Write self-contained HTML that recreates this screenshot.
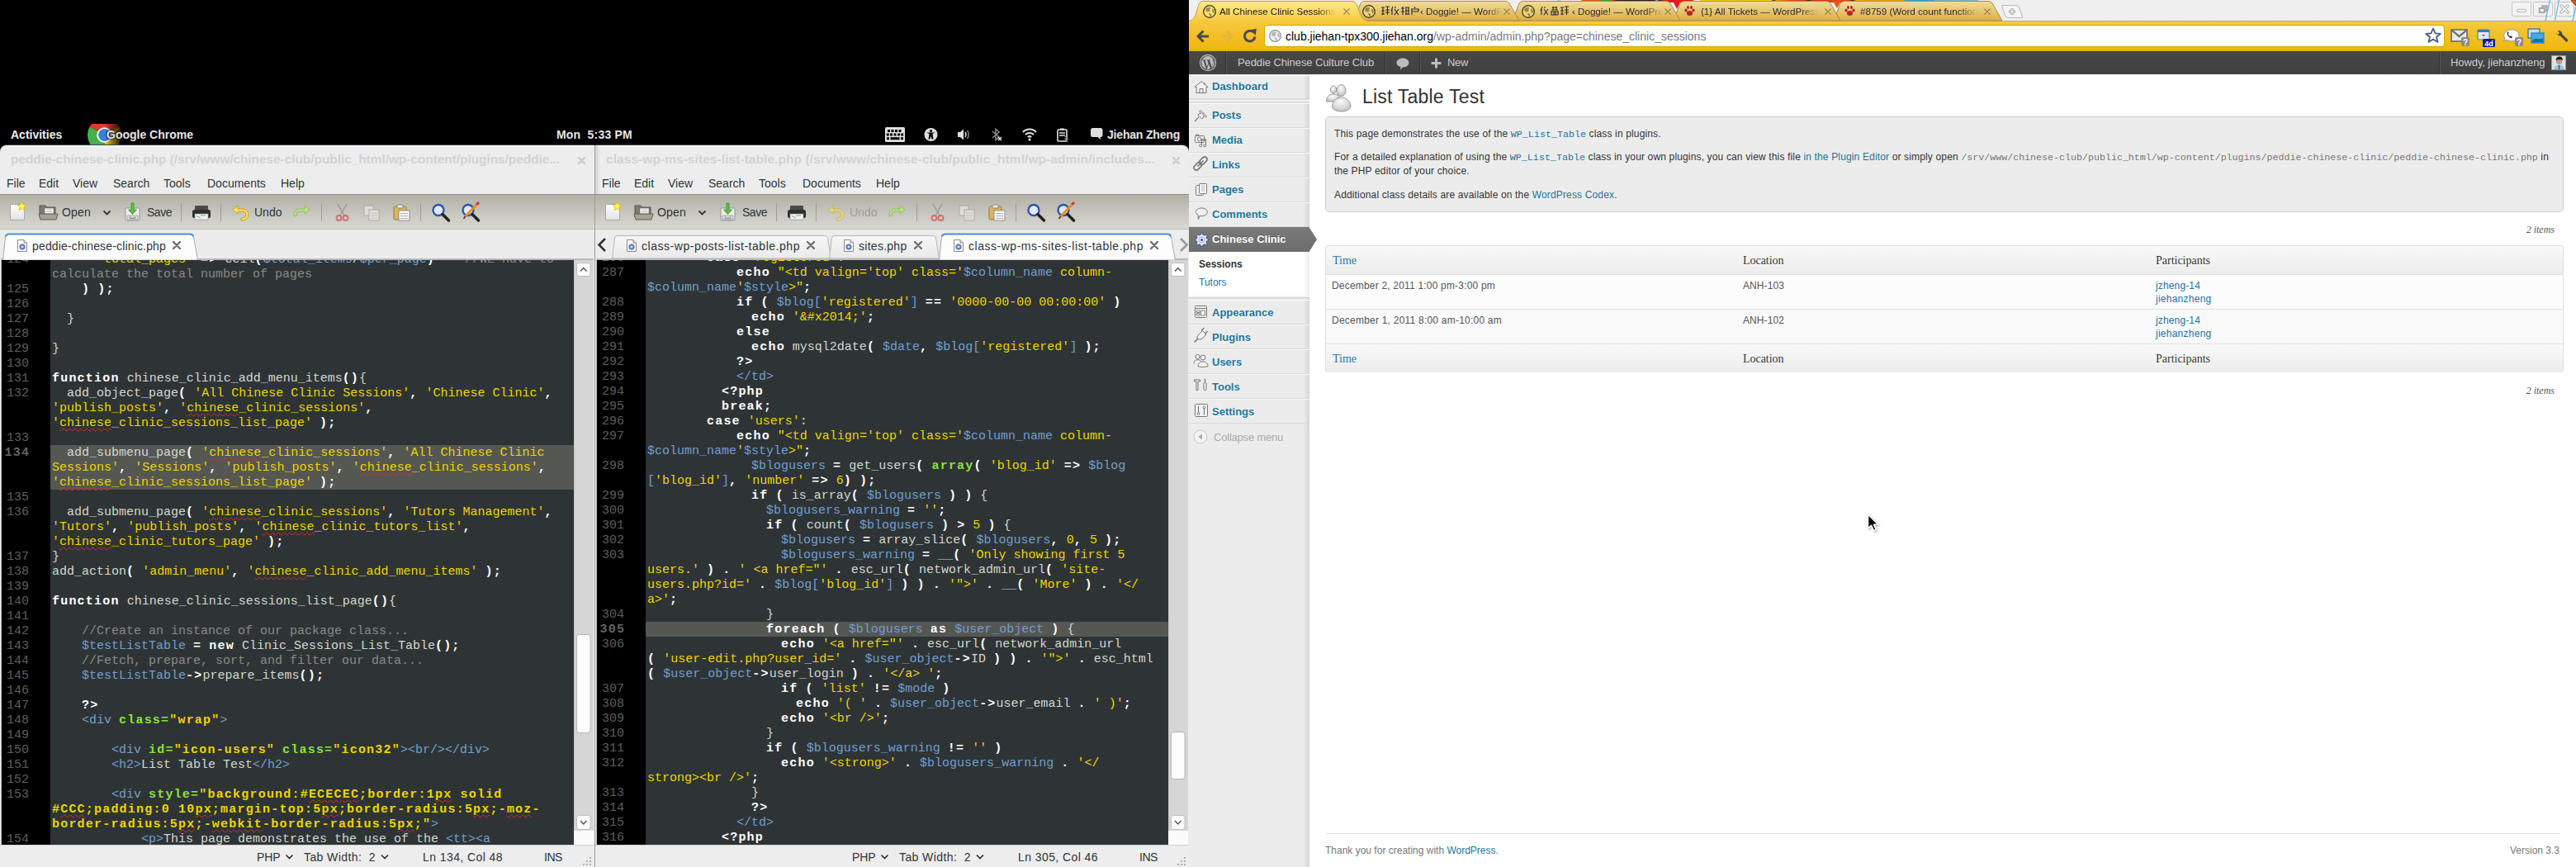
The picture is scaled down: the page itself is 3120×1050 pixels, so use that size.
<!DOCTYPE html><html><head><meta charset="utf-8"><style>
html,body{margin:0;padding:0;width:3120px;height:1050px;overflow:hidden;background:#000;}
.a{position:absolute;}
.code{position:absolute;font:15px/18px "Liberation Mono",monospace;color:#d3d7cf;white-space:pre;}
.code i{font-style:normal}
.code .s{color:#edd400}
.code .sb{color:#edd400;font-weight:bold}
.code .v{color:#729fcf}
.code .h{color:#729fcf}
.code .k{color:#ffffff;font-weight:bold}
.code .c{color:#888a85}
.code .g{color:#8ae234;font-weight:bold}
.code .k,.code .sb,.code .g{letter-spacing:1.2px}
.code u{text-decoration:underline wavy #d42b2b;text-decoration-thickness:1px;text-underline-offset:2px;text-decoration-skip-ink:none}
.ln{position:absolute;font:15px/18px "Liberation Mono",monospace;color:#5d5f5c;text-align:right;white-space:pre;}
</style></head><body>

<div class="a" style="left:0px;top:175px;width:720px;height:875px;background:#3b4652;border-radius:8px 0 0 0;"></div>
<div class="a" style="left:0px;top:176px;width:720px;height:874px;background:linear-gradient(#fafafa,#ededed 3px);border-radius:8px 0 0 0;"></div>
<div class="a" style="left:0px;top:235px;width:720px;height:43px;background:linear-gradient(#b2b1a6,#c4c3bb 45%,#d8d7d2);border-top:1px solid #8c8b84;border-bottom:1px solid #bdbdbd;box-sizing:border-box;"></div>
<div class="a" style="left:0px;top:278px;width:720px;height:37px;background:#ececec;"></div>
<div class="a" style="left:1px;top:313px;width:718px;height:711px;background:#b9b9b9;"></div>
<div class="a" style="left:2px;top:315px;width:59px;height:708px;background:#000;"></div>
<div class="a" style="left:61px;top:315px;width:634px;height:708px;background:#2e3436;overflow:hidden;"></div>
<div class="a" style="left:695px;top:315px;width:24px;height:708px;background:#d6d6d6;border-left:1px solid #c4c4c4;box-sizing:border-box;"></div>
<div class="a" style="left:0px;top:1023px;width:720px;height:27px;background:#ededed;border-top:1px solid #d0d0d0;box-sizing:border-box;"></div>
<div class="a" style="left:721px;top:175px;width:719px;height:875px;background:#3b4652;border-radius:0 8px 0 0;"></div>
<div class="a" style="left:721px;top:176px;width:719px;height:874px;background:linear-gradient(#fafafa,#ededed 3px);border-radius:0 8px 0 0;"></div>
<div class="a" style="left:721px;top:235px;width:719px;height:43px;background:linear-gradient(#b2b1a6,#c4c3bb 45%,#d8d7d2);border-top:1px solid #8c8b84;border-bottom:1px solid #bdbdbd;box-sizing:border-box;"></div>
<div class="a" style="left:721px;top:278px;width:719px;height:37px;background:#ececec;"></div>
<div class="a" style="left:722px;top:313px;width:717px;height:711px;background:#b9b9b9;"></div>
<div class="a" style="left:723px;top:315px;width:59px;height:708px;background:#000;"></div>
<div class="a" style="left:782px;top:315px;width:633px;height:708px;background:#2e3436;overflow:hidden;"></div>
<div class="a" style="left:1415px;top:315px;width:24px;height:708px;background:#d6d6d6;border-left:1px solid #c4c4c4;box-sizing:border-box;"></div>
<div class="a" style="left:721px;top:1023px;width:719px;height:27px;background:#ededed;border-top:1px solid #d0d0d0;box-sizing:border-box;"></div>
<div class="code" style="left:61px;top:315px;width:634px;height:708px;overflow:hidden"><div class="a" style="left:2px;top:-9px">      <i class="s">'total_pages'</i> <i class="k">=&gt;</i> ceil<i class="k">(</i><i class="v">$total_items</i>/<i class="v">$per_page</i><i class="k">)</i>    <i class="c">//WE have to </i></div><div class="a" style="left:2px;top:9px"><i class="c">calculate the total number of pages</i></div><div class="a" style="left:2px;top:27px">    <i class="k">)</i> <i class="k">);</i></div><div class="a" style="left:2px;top:45px"></div><div class="a" style="left:2px;top:63px">  }</div><div class="a" style="left:2px;top:81px"></div><div class="a" style="left:2px;top:99px">}</div><div class="a" style="left:2px;top:117px"></div><div class="a" style="left:2px;top:135px"><i class="k">function</i> chinese_clinic_add_menu_items<i class="k">()</i>{</div><div class="a" style="left:2px;top:153px">  add_object_page<i class="k">(</i> <i class="s">'All Chinese Clinic Sessions'</i><i class="k">,</i> <i class="s">'Chinese Clinic'</i><i class="k">,</i> </div><div class="a" style="left:2px;top:171px"><i class="s">'publish_posts'</i><i class="k">,</i> <i class="s">'</i><u><i class="s">chinese</i></u><i class="s">_clinic_sessions'</i><i class="k">,</i> </div><div class="a" style="left:2px;top:189px"><i class="s">'</i><u><i class="s">chinese</i></u><i class="s">_clinic_sessions_list_page'</i> <i class="k">);</i></div><div class="a" style="left:2px;top:207px"></div><div class="a" style="left:0;top:224px;width:2000px;height:54px;background:#555753"></div><div class="a" style="left:2px;top:225px">  add_submenu_page<i class="k">(</i> <i class="s">'</i><u><i class="s">chinese</i></u><i class="s">_clinic_sessions'</i><i class="k">,</i> <i class="s">'All Chinese Clinic </i></div><div class="a" style="left:2px;top:243px"><i class="s">Sessions'</i><i class="k">,</i> <i class="s">'Sessions'</i><i class="k">,</i> <i class="s">'publish_posts'</i><i class="k">,</i> <i class="s">'</i><u><i class="s">chinese</i></u><i class="s">_clinic_sessions'</i><i class="k">,</i> </div><div class="a" style="left:2px;top:261px"><i class="s">'</i><u><i class="s">chinese</i></u><i class="s">_clinic_sessions_list_page'</i> <i class="k">);</i></div><div class="a" style="left:2px;top:279px"></div><div class="a" style="left:2px;top:297px">  add_submenu_page<i class="k">(</i> <i class="s">'</i><u><i class="s">chinese</i></u><i class="s">_clinic_sessions'</i><i class="k">,</i> <i class="s">'Tutors Management'</i><i class="k">,</i> </div><div class="a" style="left:2px;top:315px"><i class="s">'Tutors'</i><i class="k">,</i> <i class="s">'publish_posts'</i><i class="k">,</i> <i class="s">'</i><u><i class="s">chinese</i></u><i class="s">_clinic_tutors_list'</i><i class="k">,</i> </div><div class="a" style="left:2px;top:333px"><i class="s">'</i><u><i class="s">chinese</i></u><i class="s">_clinic_tutors_page'</i> <i class="k">);</i></div><div class="a" style="left:2px;top:351px">}</div><div class="a" style="left:2px;top:369px">add_action<i class="k">(</i> <i class="s">'admin_menu'</i><i class="k">,</i> <i class="s">'</i><u><i class="s">chinese</i></u><i class="s">_clinic_add_menu_items'</i> <i class="k">);</i></div><div class="a" style="left:2px;top:387px"></div><div class="a" style="left:2px;top:405px"><i class="k">function</i> chinese_clinic_sessions_list_page<i class="k">()</i>{</div><div class="a" style="left:2px;top:423px"></div><div class="a" style="left:2px;top:441px">    <i class="c">//Create an instance of our package class...</i></div><div class="a" style="left:2px;top:459px">    <i class="v">$testListTable</i> <i class="k">=</i> <i class="k">new</i> Clinic_Sessions_List_Table<i class="k">();</i></div><div class="a" style="left:2px;top:477px">    <i class="c">//Fetch, prepare, sort, and filter our data...</i></div><div class="a" style="left:2px;top:495px">    <i class="v">$testListTable</i><i class="k">-&gt;</i>prepare_items<i class="k">();</i></div><div class="a" style="left:2px;top:513px"></div><div class="a" style="left:2px;top:531px">    <i class="k">?&gt;</i></div><div class="a" style="left:2px;top:549px">    <i class="h">&lt;div</i> <i class="g">class=</i><i class="sb">"wrap"</i><i class="h">&gt;</i></div><div class="a" style="left:2px;top:567px"></div><div class="a" style="left:2px;top:585px">        <i class="h">&lt;div</i> <i class="g">id=</i><i class="sb">"icon-users"</i> <i class="g">class=</i><i class="sb">"icon32"</i><i class="h">&gt;&lt;br/&gt;&lt;/div&gt;</i></div><div class="a" style="left:2px;top:603px">        <i class="h">&lt;h2&gt;</i>List Table Test<i class="h">&lt;/h2&gt;</i></div><div class="a" style="left:2px;top:621px"></div><div class="a" style="left:2px;top:639px">        <i class="h">&lt;div</i> <i class="g">style=</i><i class="sb">"background:#</i><u><i class="sb">ECECEC</i></u><i class="sb">;border:1</i><u><i class="sb">px</i></u><i class="sb"> solid </i></div><div class="a" style="left:2px;top:657px"><i class="sb">#</i><u><i class="sb">CCC</i></u><i class="sb">;padding:0 10</i><u><i class="sb">px</i></u><i class="sb">;margin-top:5</i><u><i class="sb">px</i></u><i class="sb">;border-radius:5</i><u><i class="sb">px</i></u><i class="sb">;-</i><u><i class="sb">moz</i></u><i class="sb">-</i></div><div class="a" style="left:2px;top:675px"><i class="sb">border-radius:5</i><u><i class="sb">px</i></u><i class="sb">;-</i><u><i class="sb">webkit</i></u><i class="sb">-border-radius:5</i><u><i class="sb">px</i></u><i class="sb">;"</i><i class="h">&gt;</i></div><div class="a" style="left:2px;top:693px">            <i class="h">&lt;p&gt;</i>This page demonstrates the use of the <i class="h">&lt;tt&gt;&lt;a</i></div></div>
<div class="ln" style="left:2px;top:315px;width:59px;height:708px;overflow:hidden"><div class="a" style="left:0;top:-9px;width:33px;text-align:right;">124</div><div class="a" style="left:0;top:27px;width:33px;text-align:right;">125</div><div class="a" style="left:0;top:45px;width:33px;text-align:right;">126</div><div class="a" style="left:0;top:63px;width:33px;text-align:right;">127</div><div class="a" style="left:0;top:81px;width:33px;text-align:right;">128</div><div class="a" style="left:0;top:99px;width:33px;text-align:right;">129</div><div class="a" style="left:0;top:117px;width:33px;text-align:right;">130</div><div class="a" style="left:0;top:135px;width:33px;text-align:right;">131</div><div class="a" style="left:0;top:153px;width:33px;text-align:right;">132</div><div class="a" style="left:0;top:207px;width:33px;text-align:right;">133</div><div class="a" style="left:0;top:225px;width:33px;text-align:right;font-weight:bold;color:#636562;letter-spacing:1.2px;width:34.2px;">134</div><div class="a" style="left:0;top:279px;width:33px;text-align:right;">135</div><div class="a" style="left:0;top:297px;width:33px;text-align:right;">136</div><div class="a" style="left:0;top:351px;width:33px;text-align:right;">137</div><div class="a" style="left:0;top:369px;width:33px;text-align:right;">138</div><div class="a" style="left:0;top:387px;width:33px;text-align:right;">139</div><div class="a" style="left:0;top:405px;width:33px;text-align:right;">140</div><div class="a" style="left:0;top:423px;width:33px;text-align:right;">141</div><div class="a" style="left:0;top:441px;width:33px;text-align:right;">142</div><div class="a" style="left:0;top:459px;width:33px;text-align:right;">143</div><div class="a" style="left:0;top:477px;width:33px;text-align:right;">144</div><div class="a" style="left:0;top:495px;width:33px;text-align:right;">145</div><div class="a" style="left:0;top:513px;width:33px;text-align:right;">146</div><div class="a" style="left:0;top:531px;width:33px;text-align:right;">147</div><div class="a" style="left:0;top:549px;width:33px;text-align:right;">148</div><div class="a" style="left:0;top:567px;width:33px;text-align:right;">149</div><div class="a" style="left:0;top:585px;width:33px;text-align:right;">150</div><div class="a" style="left:0;top:603px;width:33px;text-align:right;">151</div><div class="a" style="left:0;top:621px;width:33px;text-align:right;">152</div><div class="a" style="left:0;top:639px;width:33px;text-align:right;">153</div><div class="a" style="left:0;top:693px;width:33px;text-align:right;">154</div></div>
<div class="code" style="left:782px;top:315px;width:633px;height:708px;overflow:hidden"><div class="a" style="left:2px;top:-11px">        <i class="k">case</i> <i class="s">'registered'</i>:</div><div class="a" style="left:2px;top:7px">            <i class="k">echo</i> <i class="s">"&lt;td valign='top' class='</i><i class="v">$column_name</i><i class="s"> column-</i></div><div class="a" style="left:2px;top:25px"><i class="v">$column_name</i><i class="s">'</i><i class="v">$style</i><i class="s">&gt;"</i><i class="k">;</i></div><div class="a" style="left:2px;top:43px">            <i class="k">if</i> <i class="k">(</i> <i class="v">$blog[</i><i class="s">'registered'</i><i class="v">]</i> <i class="k">==</i> <i class="s">'0000-00-00 00:00:00'</i> <i class="k">)</i></div><div class="a" style="left:2px;top:61px">              <i class="k">echo</i> <i class="s">'&amp;#x2014;'</i><i class="k">;</i></div><div class="a" style="left:2px;top:79px">            <i class="k">else</i></div><div class="a" style="left:2px;top:97px">              <i class="k">echo</i> mysql2date<i class="k">(</i> <i class="v">$date</i><i class="k">,</i> <i class="v">$blog[</i><i class="s">'registered'</i><i class="v">]</i> <i class="k">);</i></div><div class="a" style="left:2px;top:115px">            <i class="k">?&gt;</i></div><div class="a" style="left:2px;top:133px">            <i class="h">&lt;/td&gt;</i></div><div class="a" style="left:2px;top:151px">          <i class="k">&lt;?php</i></div><div class="a" style="left:2px;top:169px">          <i class="k">break;</i></div><div class="a" style="left:2px;top:187px">        <i class="k">case</i> <i class="s">'users'</i>:</div><div class="a" style="left:2px;top:205px">            <i class="k">echo</i> <i class="s">"&lt;td valign='top' class='</i><i class="v">$column_name</i><i class="s"> column-</i></div><div class="a" style="left:2px;top:223px"><i class="v">$column_name</i><i class="s">'</i><i class="v">$style</i><i class="s">&gt;"</i><i class="k">;</i></div><div class="a" style="left:2px;top:241px">              <i class="v">$blogusers</i> <i class="k">=</i> get_users<i class="k">(</i> <i class="g">array</i><i class="k">(</i> <i class="s">'blog_id'</i> <i class="k">=&gt;</i> <i class="v">$blog</i></div><div class="a" style="left:2px;top:259px"><i class="v">[</i><i class="s">'blog_id'</i><i class="v">]</i><i class="k">,</i> <i class="s">'number'</i> <i class="k">=&gt;</i> <i class="s">6</i><i class="k">)</i> <i class="k">);</i></div><div class="a" style="left:2px;top:277px">              <i class="k">if</i> <i class="k">(</i> is_array<i class="k">(</i> <i class="v">$blogusers</i> <i class="k">)</i> <i class="k">)</i> {</div><div class="a" style="left:2px;top:295px">                <i class="v">$blogusers_warning</i> <i class="k">=</i> <i class="s">''</i><i class="k">;</i></div><div class="a" style="left:2px;top:313px">                <i class="k">if</i> <i class="k">(</i> count<i class="k">(</i> <i class="v">$blogusers</i> <i class="k">)</i> <i class="k">&gt;</i> <i class="s">5</i> <i class="k">)</i> {</div><div class="a" style="left:2px;top:331px">                  <i class="v">$blogusers</i> <i class="k">=</i> array_slice<i class="k">(</i> <i class="v">$blogusers</i><i class="k">,</i> <i class="s">0</i><i class="k">,</i> <i class="s">5</i> <i class="k">);</i></div><div class="a" style="left:2px;top:349px">                  <i class="v">$blogusers_warning</i> <i class="k">=</i> __<i class="k">(</i> <i class="s">'Only showing first 5 </i></div><div class="a" style="left:2px;top:367px"><i class="s">users.'</i> <i class="k">)</i> <i class="k">.</i> <i class="s">' &lt;a href="'</i> <i class="k">.</i> esc_url<i class="k">(</i> network_admin_url<i class="k">(</i> <i class="s">'site-</i></div><div class="a" style="left:2px;top:385px"><i class="s">users.php?id='</i> <i class="k">.</i> <i class="v">$blog[</i><i class="s">'blog_id'</i><i class="v">]</i> <i class="k">)</i> <i class="k">)</i> <i class="k">.</i> <i class="s">'"&gt;'</i> <i class="k">.</i> __<i class="k">(</i> <i class="s">'More'</i> <i class="k">)</i> <i class="k">.</i> <i class="s">'&lt;/</i></div><div class="a" style="left:2px;top:403px"><i class="s">a&gt;'</i><i class="k">;</i></div><div class="a" style="left:2px;top:421px">                }</div><div class="a" style="left:0;top:438px;width:2000px;height:18px;background:#555753"></div><div class="a" style="left:2px;top:439px">                <i class="k">foreach</i> <i class="k">(</i> <i class="v">$blogusers</i> <i class="k">as</i> <i class="v">$user_object</i> <i class="k">)</i> {</div><div class="a" style="left:2px;top:457px">                  <i class="k">echo</i> <i class="s">'&lt;a href="'</i> <i class="k">.</i> esc_url<i class="k">(</i> network_admin_url</div><div class="a" style="left:2px;top:475px"><i class="k">(</i> <i class="s">'user-edit.php?user_id='</i> <i class="k">.</i> <i class="v">$user_object</i><i class="k">-&gt;</i>ID <i class="k">)</i> <i class="k">)</i> <i class="k">.</i> <i class="s">'"&gt;'</i> <i class="k">.</i> esc_html</div><div class="a" style="left:2px;top:493px"><i class="k">(</i> <i class="v">$user_object</i><i class="k">-&gt;</i>user_login <i class="k">)</i> <i class="k">.</i> <i class="s">'&lt;/a&gt; '</i><i class="k">;</i></div><div class="a" style="left:2px;top:511px">                  <i class="k">if</i> <i class="k">(</i> <i class="s">'list'</i> <i class="k">!=</i> <i class="v">$mode</i> <i class="k">)</i></div><div class="a" style="left:2px;top:529px">                    <i class="k">echo</i> <i class="s">'( '</i> <i class="k">.</i> <i class="v">$user_object</i><i class="k">-&gt;</i>user_email <i class="k">.</i> <i class="s">' )'</i><i class="k">;</i></div><div class="a" style="left:2px;top:547px">                  <i class="k">echo</i> <i class="s">'&lt;br /&gt;'</i><i class="k">;</i></div><div class="a" style="left:2px;top:565px">                }</div><div class="a" style="left:2px;top:583px">                <i class="k">if</i> <i class="k">(</i> <i class="v">$blogusers_warning</i> <i class="k">!=</i> <i class="s">''</i> <i class="k">)</i></div><div class="a" style="left:2px;top:601px">                  <i class="k">echo</i> <i class="s">'&lt;strong&gt;'</i> <i class="k">.</i> <i class="v">$blogusers_warning</i> <i class="k">.</i> <i class="s">'&lt;/</i></div><div class="a" style="left:2px;top:619px"><i class="s">strong&gt;&lt;br /&gt;'</i><i class="k">;</i></div><div class="a" style="left:2px;top:637px">              }</div><div class="a" style="left:2px;top:655px">              <i class="k">?&gt;</i></div><div class="a" style="left:2px;top:673px">            <i class="h">&lt;/td&gt;</i></div><div class="a" style="left:2px;top:691px">          <i class="k">&lt;?php</i></div></div>
<div class="ln" style="left:723px;top:315px;width:59px;height:708px;overflow:hidden"><div class="a" style="left:0;top:-11px;width:33px;text-align:right;">286</div><div class="a" style="left:0;top:7px;width:33px;text-align:right;">287</div><div class="a" style="left:0;top:43px;width:33px;text-align:right;">288</div><div class="a" style="left:0;top:61px;width:33px;text-align:right;">289</div><div class="a" style="left:0;top:79px;width:33px;text-align:right;">290</div><div class="a" style="left:0;top:97px;width:33px;text-align:right;">291</div><div class="a" style="left:0;top:115px;width:33px;text-align:right;">292</div><div class="a" style="left:0;top:133px;width:33px;text-align:right;">293</div><div class="a" style="left:0;top:151px;width:33px;text-align:right;">294</div><div class="a" style="left:0;top:169px;width:33px;text-align:right;">295</div><div class="a" style="left:0;top:187px;width:33px;text-align:right;">296</div><div class="a" style="left:0;top:205px;width:33px;text-align:right;">297</div><div class="a" style="left:0;top:241px;width:33px;text-align:right;">298</div><div class="a" style="left:0;top:277px;width:33px;text-align:right;">299</div><div class="a" style="left:0;top:295px;width:33px;text-align:right;">300</div><div class="a" style="left:0;top:313px;width:33px;text-align:right;">301</div><div class="a" style="left:0;top:331px;width:33px;text-align:right;">302</div><div class="a" style="left:0;top:349px;width:33px;text-align:right;">303</div><div class="a" style="left:0;top:421px;width:33px;text-align:right;">304</div><div class="a" style="left:0;top:439px;width:33px;text-align:right;font-weight:bold;color:#636562;letter-spacing:1.2px;width:34.2px;">305</div><div class="a" style="left:0;top:457px;width:33px;text-align:right;">306</div><div class="a" style="left:0;top:511px;width:33px;text-align:right;">307</div><div class="a" style="left:0;top:529px;width:33px;text-align:right;">308</div><div class="a" style="left:0;top:547px;width:33px;text-align:right;">309</div><div class="a" style="left:0;top:565px;width:33px;text-align:right;">310</div><div class="a" style="left:0;top:583px;width:33px;text-align:right;">311</div><div class="a" style="left:0;top:601px;width:33px;text-align:right;">312</div><div class="a" style="left:0;top:637px;width:33px;text-align:right;">313</div><div class="a" style="left:0;top:655px;width:33px;text-align:right;">314</div><div class="a" style="left:0;top:673px;width:33px;text-align:right;">315</div><div class="a" style="left:0;top:691px;width:33px;text-align:right;">316</div></div>
<div class="a" style="left:720px;top:176px;width:1px;height:874px;background:#9c9c9c;"></div>
<div class="a" style="left:721px;top:176px;width:6px;height:59px;background:linear-gradient(90deg,rgba(0,0,0,0.12),rgba(0,0,0,0));"></div>
<div class="a" style="left:13px;top:156px;font:bold 14px/14px 'Liberation Sans',sans-serif;color:#eeeeec;white-space:pre;">Activities</div>
<svg class="a" style="left:104px;top:150px" width="46" height="25" viewBox="0 0 46 25">
<defs><linearGradient id="fadeR" x1="0" x2="1" y1="0" y2="0"><stop offset="0.5" stop-color="#000" stop-opacity="0"/><stop offset="1" stop-color="#000" stop-opacity="1"/></linearGradient>
<clipPath id="cpc"><rect x="0" y="0" width="46" height="25"/></clipPath></defs>
<g clip-path="url(#cpc)">
<path d="M22.5 13.5 L4.75 3.25 A20.5 20.5 0 0 1 40.25 3.25 Z" fill="#e0392b"/>
<path d="M22.5 13.5 L40.25 3.25 A20.5 20.5 0 0 1 22.5 34 Z" fill="#f0c41b"/>
<path d="M22.5 13.5 L22.5 34 A20.5 20.5 0 0 1 4.75 3.25 Z" fill="#47b04b"/>
<circle cx="22.5" cy="13.5" r="9.3" fill="#fff"/>
<circle cx="22.5" cy="13.5" r="7.4" fill="#3d7fd6"/>
<rect x="0" y="0" width="46" height="25" fill="url(#fadeR)"/>
</g></svg>
<div class="a" style="left:129px;top:156px;font:bold 14px/14px 'Liberation Sans',sans-serif;color:#e6e6e6;white-space:pre;text-shadow:0 0 2px #000,0 0 2px #000;">Google Chrome</div>
<div class="a" style="left:674px;top:156px;font:bold 14px/14px 'Liberation Sans',sans-serif;color:#e6e6e6;white-space:pre;letter-spacing:0.2px">Mon  5:33 PM</div>
<div class="a" style="left:1341px;top:156px;font:bold 14px/14px 'Liberation Sans',sans-serif;color:#e6e6e6;white-space:pre;letter-spacing:-0.186px;">Jiehan Zheng</div>
<svg class="a" style="left:1060px;top:150px" width="280" height="25" viewBox="1060 150 280 25">
<!-- keyboard -->
<rect x="1072" y="154" width="24" height="18" rx="1.5" fill="#e0e0e0"/>
<g fill="#000">
<rect x="1075" y="157" width="3" height="3"/><rect x="1079.5" y="157" width="3" height="3"/><rect x="1084" y="157" width="3" height="3"/><rect x="1088.5" y="157" width="3" height="3"/>
<rect x="1073.8" y="161.5" width="3" height="3"/><rect x="1078" y="161.5" width="3" height="3"/><rect x="1082.5" y="161.5" width="3" height="3"/><rect x="1087" y="161.5" width="3" height="3"/><rect x="1091.2" y="161.5" width="3" height="3"/>
<rect x="1074" y="166.2" width="3" height="3"/><rect x="1078.5" y="166.2" width="11" height="3"/><rect x="1091" y="166.2" width="3" height="3"/>
</g>
<!-- accessibility -->
<circle cx="1127.5" cy="163" r="8" fill="#e0e0e0"/>
<circle cx="1127.5" cy="158.5" r="1.6" fill="#000"/>
<path d="M1122 160.5 L1133 160.5 L1129.5 162 L1130.5 168.5 L1128.5 168.5 L1127.5 164.5 L1126.5 168.5 L1124.5 168.5 L1125.5 162 Z" fill="#000"/>
<!-- volume -->
<path d="M1160 160 L1163 160 L1167 156.5 L1167 169.5 L1163 166 L1160 166 Z" fill="#e0e0e0"/>
<path d="M1169 160 Q1171 163 1169 166" stroke="#e0e0e0" stroke-width="1.4" fill="none"/>
<path d="M1171.5 158 Q1175 163 1171.5 168" stroke="#e0e0e0" stroke-width="1.4" fill="none" opacity="0.6"/>
<!-- bluetooth disabled -->
<path d="M1202 159 L1210 166 L1206 169.5 L1206 156.5 L1210 160 L1202 167" stroke="#8a8a8a" stroke-width="1.5" fill="none"/>
<path d="M1209 166 L1213 170 M1213 166 L1209 170" stroke="#e0e0e0" stroke-width="1.5"/>
<!-- wifi -->
<path d="M1239 160 A11 11 0 0 1 1255 160" stroke="#e0e0e0" stroke-width="2" fill="none"/>
<path d="M1242 163 A7 7 0 0 1 1252 163" stroke="#e0e0e0" stroke-width="2" fill="none"/>
<path d="M1244.8 166 A3.5 3.5 0 0 1 1249.2 166" stroke="#e0e0e0" stroke-width="2" fill="none"/>
<circle cx="1247" cy="169" r="1.6" fill="#e0e0e0"/>
<!-- battery -->
<rect x="1281" y="157" width="11" height="14" rx="1" stroke="#e0e0e0" stroke-width="1.6" fill="none"/>
<rect x="1284" y="155.5" width="5" height="2" fill="#e0e0e0"/>
<path d="M1283 161 h7 M1283 164 h7" stroke="#e0e0e0" stroke-width="1.3"/>
<path d="M1289 164 L1293 168 L1290 168 L1293 172" stroke="#8a8a8a" stroke-width="1.2" fill="none"/>
<!-- chat -->
<path d="M1323.5 155 h9.5 a2.5 2.5 0 0 1 2.5 2.5 v6 a2.5 2.5 0 0 1 -2.5 2.5 h-0.5 l0.8 3.2 l-3.8 -3.2 h-6 a2.5 2.5 0 0 1 -2.5 -2.5 v-6 a2.5 2.5 0 0 1 2.5 -2.5z" fill="#e0e0e0"/>
</svg>
<div class="a" style="left:13px;top:185px;font:bold 15.5px/15.5px 'Liberation Sans',sans-serif;color:#d2d2d2;white-space:pre;letter-spacing:-0.076px;">peddie-chinese-clinic.php (/srv/www/chinese-club/public_html/wp-content/plugins/peddie...</div>
<svg class="a" style="left:700px;top:190px" width="9" height="9" viewBox="0 0 10 10"><path d="M1 1 L9 9 M9 1 L1 9" stroke="#cdcdcd" stroke-width="2.8" stroke-linecap="round"/></svg>
<div class="a" style="left:8px;top:215px;font:normal 14px/14px 'Liberation Sans',sans-serif;color:#2e3436;white-space:pre;">File</div>
<div class="a" style="left:47px;top:215px;font:normal 14px/14px 'Liberation Sans',sans-serif;color:#2e3436;white-space:pre;">Edit</div>
<div class="a" style="left:88px;top:215px;font:normal 14px/14px 'Liberation Sans',sans-serif;color:#2e3436;white-space:pre;">View</div>
<div class="a" style="left:137px;top:215px;font:normal 14px/14px 'Liberation Sans',sans-serif;color:#2e3436;white-space:pre;">Search</div>
<div class="a" style="left:198px;top:215px;font:normal 14px/14px 'Liberation Sans',sans-serif;color:#2e3436;white-space:pre;">Tools</div>
<div class="a" style="left:251px;top:215px;font:normal 14px/14px 'Liberation Sans',sans-serif;color:#2e3436;white-space:pre;">Documents</div>
<div class="a" style="left:340px;top:215px;font:normal 14px/14px 'Liberation Sans',sans-serif;color:#2e3436;white-space:pre;">Help</div>
<svg class="a" style="left:0px;top:238px" width="600" height="38" viewBox="0 238 600 38">
<defs>
<linearGradient id="pg0" x1="0" x2="0" y1="0" y2="1"><stop offset="0" stop-color="#ffffff"/><stop offset="1" stop-color="#e2e2e2"/></linearGradient>
<linearGradient id="fold0" x1="0" x2="0" y1="0" y2="1"><stop offset="0" stop-color="#9d9c8c"/><stop offset="1" stop-color="#5f5e55"/></linearGradient>
</defs>
<!-- new -->
<path d="M12.5 247.5 H26 L29.5 251 V266.5 H12.5 Z" fill="url(#pg0)" stroke="#a8a8a8"/>
<path d="M26.5 244.5 l1.6 3.3 3.6 .5 -2.6 2.5 .6 3.6 -3.2 -1.7 -3.2 1.7 .6 -3.6 -2.6 -2.5 3.6 -.5z" fill="#fff25a" stroke="#d8b800" stroke-width="0.8"/>
<!-- open -->
<path d="M48 249 h7 l2 2 h10 v12 h-19z" fill="#7d7c70" stroke="#55554c" stroke-width="1"/>
<rect x="54" y="252" width="11" height="7" fill="#fff" stroke="#666" stroke-width="0.6"/>
<path d="M55.5 254 h8 M55.5 256.5 h8" stroke="#999" stroke-width="0.8"/>
<path d="M47 259 h23 l-2 7 h-19z" fill="#a3a293" stroke="#5d5c52" stroke-width="1"/>
<path d="M125.5 255.5 L129.5 259.5 L133.5 255.5" stroke="#333" stroke-width="1.8" fill="none"/>
<!-- save -->
<rect x="152" y="252" width="17" height="15" rx="1.5" fill="#eeeeee" stroke="#8f8f8f"/>
<path d="M154 261 h13 v5 h-13z" fill="#d9d9d9" stroke="#9a9a9a" stroke-width="0.8"/>
<path d="M157.5 262.5 v1.8 h6 v-1.8" stroke="#777" fill="none" stroke-width="0.9"/>
<path d="M159 246 h3 v8 h3.5 l-5 5.5 -5 -5.5 h3.5z" fill="#5cc43a" stroke="#3a8f1d" stroke-width="0.8"/>
<path d="M219.5 246 v22" stroke="#9e9d96" stroke-width="1"/>
<!-- print -->
<rect x="236" y="249" width="16" height="6" rx="1" fill="#4a4a4a"/>
<rect x="233" y="254" width="22" height="10" rx="2.5" fill="#2f2f2f"/>
<rect x="236" y="259" width="16" height="7" fill="#f4f4f4" stroke="#888" stroke-width="0.6"/>
<path d="M238 261.5 l5 2.5 M243 261 h6" stroke="#5aa845" stroke-width="0.9"/>
<path d="M267.5 246 v22" stroke="#9e9d96" stroke-width="1"/>
<!-- undo -->
<g opacity="1">
<path d="M288 249 l-6 5 6 5 v-3 h6 a4 4 0 0 1 4 4 a4 4 0 0 1 -4 4 h-2 v3 h2 a7 7 0 0 0 7 -7 a7 7 0 0 0 -7 -7 h-6z" fill="#fbe36b" stroke="#c9a20b" stroke-width="1"/>
</g>
<!-- redo -->
<path d="M369 249 l6 5 -6 5 v-3 h-6 a4 4 0 0 0 -4 4 v1.5 h-3 v-1.5 a7 7 0 0 1 7 -7 h6z" fill="#b9e28a" stroke="#8cc05a" stroke-width="1"/>
<path d="M389.5 246 v22" stroke="#9e9d96" stroke-width="1"/>
<!-- cut -->
<g opacity="0.65">
<path d="M409 247 L417 261 M420 247 L412 261" stroke="#8c8c8c" stroke-width="1.6"/>
<circle cx="410.5" cy="264" r="3" fill="none" stroke="#d63b3b" stroke-width="1.8"/>
<circle cx="418.5" cy="264" r="3" fill="none" stroke="#d63b3b" stroke-width="1.8"/>
</g>
<!-- copy -->
<g opacity="0.55">
<rect x="441" y="249" width="11" height="12" fill="#f3f3f3" stroke="#8f8f8f"/>
<rect x="447" y="254" width="12" height="13" fill="#f3f3f3" stroke="#8f8f8f"/>
<path d="M449 258 h8 M449 261 h8 M449 264 h8" stroke="#aaa" stroke-width="0.8"/>
</g>
<!-- paste -->
<rect x="477" y="250" width="15" height="16" rx="1.5" fill="#d9b45c" stroke="#9a7a2a"/>
<rect x="481" y="248" width="7" height="4" rx="1" fill="#e8e8e8" stroke="#777" stroke-width="0.8"/>
<rect x="483" y="255" width="13" height="12" fill="#fafafa" stroke="#8f8f8f"/>
<path d="M485 258.5 h9 M485 261.5 h9 M485 264.5 h9" stroke="#999" stroke-width="0.8"/>
<path d="M509.5 246 v22" stroke="#9e9d96" stroke-width="1"/>
<!-- find -->
<circle cx="531" cy="254.5" r="6.5" fill="#dfe9f7" stroke="#2a56b0" stroke-width="2.4"/>
<path d="M536 259.5 L543.5 267" stroke="#222" stroke-width="3.5" stroke-linecap="round"/>
<!-- replace -->
<circle cx="567" cy="254.5" r="6.5" fill="#dfe9f7" stroke="#2a56b0" stroke-width="2.4"/>
<path d="M572 259.5 L579.5 267" stroke="#222" stroke-width="3.5" stroke-linecap="round"/>
<path d="M563 263 L577 248" stroke="#f08a1c" stroke-width="3"/>
<path d="M577 248 L580 245" stroke="#d43a2a" stroke-width="3"/>
<path d="M561.5 265 L563.5 262" stroke="#333" stroke-width="1.5"/>
</svg>
<div class="a" style="left:75px;top:250px;font:normal 14px/14px 'Liberation Sans',sans-serif;color:#2e3436;white-space:pre;letter-spacing:0.188px;">Open</div>
<div class="a" style="left:178px;top:250px;font:normal 14px/14px 'Liberation Sans',sans-serif;color:#2e3436;white-space:pre;letter-spacing:-0.480px;">Save</div>
<div class="a" style="left:308px;top:250px;font:normal 14px/14px 'Liberation Sans',sans-serif;color:#2e3436;white-space:pre;letter-spacing:0.008px;">Undo</div>
<svg class="a" style="left:3px;top:282px" width="237" height="33" viewBox="0 0 237 33">
<path d="M0.5 33 L3.5 5 Q4 1.5 8 1.5 L227 1.5 Q231 1.5 231.5 5 L236.5 33 Z" fill="#fdfdfd" stroke="#a9a9a9" stroke-width="1"/>
<path d="M3.8 4.5 Q4.5 1.5 8 1.5 L227 1.5 Q230.5 1.5 231.2 4.5" fill="none" stroke="#4a90d9" stroke-width="2.2"/>
</svg>
<svg class="a" style="left:20px;top:289px" width="14" height="17" viewBox="0 0 14 17">
<path d="M1.5 1.5 H9 L12.5 5 V15.5 H1.5 Z" fill="#fbfbfb" stroke="#8a8a8a" stroke-width="1"/>
<path d="M9 1.5 V5 H12.5" fill="#e0e0e0" stroke="#8a8a8a" stroke-width="1"/>
<circle cx="7" cy="10" r="3.2" fill="#6f8fc8" stroke="#3b5ea8" stroke-width="0.8"/>
<circle cx="7" cy="10" r="1.3" fill="#dfe8f7"/>
</svg>
<div class="a" style="left:39px;top:291px;font:normal 14px/14px 'Liberation Sans',sans-serif;color:#2e3436;white-space:pre;letter-spacing:0.160px;">peddie-chinese-clinic.php</div>
<svg class="a" style="left:209px;top:292px" width="10" height="10" viewBox="0 0 10 10"><path d="M1 1 L9 9 M9 1 L1 9" stroke="#6e6e6e" stroke-width="2.4" stroke-linecap="round"/></svg>
<div class="a" style="left:311px;top:1031px;font:normal 14px/14px 'Liberation Sans',sans-serif;color:#2e3436;white-space:pre;letter-spacing:-0.099px;">PHP</div>
<div class="a" style="left:368px;top:1031px;font:normal 14px/14px 'Liberation Sans',sans-serif;color:#2e3436;white-space:pre;letter-spacing:0.407px;">Tab Width:  2</div>
<div class="a" style="left:512px;top:1031px;font:normal 14px/14px 'Liberation Sans',sans-serif;color:#2e3436;white-space:pre;letter-spacing:0.423px;">Ln 134, Col 48</div>
<div class="a" style="left:659px;top:1031px;font:normal 14px/14px 'Liberation Sans',sans-serif;color:#2e3436;white-space:pre;letter-spacing:-0.448px;">INS</div>
<svg class="a" style="left:0px;top:1030px" width="720" height="20" viewBox="0 1030 720 20">
<path d="M346.5 1035.5 L350.5 1039.5 L354.5 1035.5 M462 1035.5 L466 1039.5 L470 1035.5" stroke="#2e3436" stroke-width="1.7" fill="none"/>
<g fill="#b0b0b0"><rect x="714" y="1046" width="2" height="2"/><rect x="710" y="1046" width="2" height="2"/><rect x="706" y="1046" width="2" height="2"/><rect x="714" y="1042" width="2" height="2"/><rect x="710" y="1042" width="2" height="2"/><rect x="714" y="1038" width="2" height="2"/></g>
</svg>
<div class="a" style="left:695px;top:1006px;width:24px;height:17px;background:#fbfbfb;"></div>
<svg class="a" style="left:698px;top:316px" width="18" height="706" viewBox="0 316 18 706">
<rect x="0.5" y="318.5" width="16.5" height="16" rx="3" fill="#fff" stroke="#bdbdbd"/>
<path d="M5 328.5 L8.75 324.5 L12.5 328.5" stroke="#555" stroke-width="1.5" fill="none"/>
<rect x="0.5" y="768.5" width="16.5" height="119" rx="3" fill="#fdfdfd" stroke="#b4b4b4"/>
<rect x="0.5" y="987.5" width="16.5" height="17" rx="3" fill="#fff" stroke="#bdbdbd"/>
<path d="M5 994 L8.75 998 L12.5 994" stroke="#555" stroke-width="1.5" fill="none"/>
</svg>
<div class="a" style="left:734px;top:185px;font:bold 15.5px/15.5px 'Liberation Sans',sans-serif;color:#d2d2d2;white-space:pre;letter-spacing:0.060px;">class-wp-ms-sites-list-table.php (/srv/www/chinese-club/public_html/wp-admin/includes...</div>
<svg class="a" style="left:1420px;top:190px" width="9" height="9" viewBox="0 0 10 10"><path d="M1 1 L9 9 M9 1 L1 9" stroke="#cdcdcd" stroke-width="2.8" stroke-linecap="round"/></svg>
<div class="a" style="left:729px;top:215px;font:normal 14px/14px 'Liberation Sans',sans-serif;color:#2e3436;white-space:pre;">File</div>
<div class="a" style="left:768px;top:215px;font:normal 14px/14px 'Liberation Sans',sans-serif;color:#2e3436;white-space:pre;">Edit</div>
<div class="a" style="left:809px;top:215px;font:normal 14px/14px 'Liberation Sans',sans-serif;color:#2e3436;white-space:pre;">View</div>
<div class="a" style="left:858px;top:215px;font:normal 14px/14px 'Liberation Sans',sans-serif;color:#2e3436;white-space:pre;">Search</div>
<div class="a" style="left:919px;top:215px;font:normal 14px/14px 'Liberation Sans',sans-serif;color:#2e3436;white-space:pre;">Tools</div>
<div class="a" style="left:972px;top:215px;font:normal 14px/14px 'Liberation Sans',sans-serif;color:#2e3436;white-space:pre;">Documents</div>
<div class="a" style="left:1061px;top:215px;font:normal 14px/14px 'Liberation Sans',sans-serif;color:#2e3436;white-space:pre;">Help</div>
<svg class="a" style="left:721px;top:238px" width="600" height="38" viewBox="0 238 600 38">
<defs>
<linearGradient id="pg721" x1="0" x2="0" y1="0" y2="1"><stop offset="0" stop-color="#ffffff"/><stop offset="1" stop-color="#e2e2e2"/></linearGradient>
<linearGradient id="fold721" x1="0" x2="0" y1="0" y2="1"><stop offset="0" stop-color="#9d9c8c"/><stop offset="1" stop-color="#5f5e55"/></linearGradient>
</defs>
<!-- new -->
<path d="M12.5 247.5 H26 L29.5 251 V266.5 H12.5 Z" fill="url(#pg721)" stroke="#a8a8a8"/>
<path d="M26.5 244.5 l1.6 3.3 3.6 .5 -2.6 2.5 .6 3.6 -3.2 -1.7 -3.2 1.7 .6 -3.6 -2.6 -2.5 3.6 -.5z" fill="#fff25a" stroke="#d8b800" stroke-width="0.8"/>
<!-- open -->
<path d="M48 249 h7 l2 2 h10 v12 h-19z" fill="#7d7c70" stroke="#55554c" stroke-width="1"/>
<rect x="54" y="252" width="11" height="7" fill="#fff" stroke="#666" stroke-width="0.6"/>
<path d="M55.5 254 h8 M55.5 256.5 h8" stroke="#999" stroke-width="0.8"/>
<path d="M47 259 h23 l-2 7 h-19z" fill="#a3a293" stroke="#5d5c52" stroke-width="1"/>
<path d="M125.5 255.5 L129.5 259.5 L133.5 255.5" stroke="#333" stroke-width="1.8" fill="none"/>
<!-- save -->
<rect x="152" y="252" width="17" height="15" rx="1.5" fill="#eeeeee" stroke="#8f8f8f"/>
<path d="M154 261 h13 v5 h-13z" fill="#d9d9d9" stroke="#9a9a9a" stroke-width="0.8"/>
<path d="M157.5 262.5 v1.8 h6 v-1.8" stroke="#777" fill="none" stroke-width="0.9"/>
<path d="M159 246 h3 v8 h3.5 l-5 5.5 -5 -5.5 h3.5z" fill="#5cc43a" stroke="#3a8f1d" stroke-width="0.8"/>
<path d="M219.5 246 v22" stroke="#9e9d96" stroke-width="1"/>
<!-- print -->
<rect x="236" y="249" width="16" height="6" rx="1" fill="#4a4a4a"/>
<rect x="233" y="254" width="22" height="10" rx="2.5" fill="#2f2f2f"/>
<rect x="236" y="259" width="16" height="7" fill="#f4f4f4" stroke="#888" stroke-width="0.6"/>
<path d="M238 261.5 l5 2.5 M243 261 h6" stroke="#5aa845" stroke-width="0.9"/>
<path d="M267.5 246 v22" stroke="#9e9d96" stroke-width="1"/>
<!-- undo -->
<g opacity="0.55">
<path d="M288 249 l-6 5 6 5 v-3 h6 a4 4 0 0 1 4 4 a4 4 0 0 1 -4 4 h-2 v3 h2 a7 7 0 0 0 7 -7 a7 7 0 0 0 -7 -7 h-6z" fill="#fbe36b" stroke="#c9a20b" stroke-width="1"/>
</g>
<!-- redo -->
<path d="M369 249 l6 5 -6 5 v-3 h-6 a4 4 0 0 0 -4 4 v1.5 h-3 v-1.5 a7 7 0 0 1 7 -7 h6z" fill="#b9e28a" stroke="#8cc05a" stroke-width="1"/>
<path d="M389.5 246 v22" stroke="#9e9d96" stroke-width="1"/>
<!-- cut -->
<g opacity="0.65">
<path d="M409 247 L417 261 M420 247 L412 261" stroke="#8c8c8c" stroke-width="1.6"/>
<circle cx="410.5" cy="264" r="3" fill="none" stroke="#d63b3b" stroke-width="1.8"/>
<circle cx="418.5" cy="264" r="3" fill="none" stroke="#d63b3b" stroke-width="1.8"/>
</g>
<!-- copy -->
<g opacity="0.55">
<rect x="441" y="249" width="11" height="12" fill="#f3f3f3" stroke="#8f8f8f"/>
<rect x="447" y="254" width="12" height="13" fill="#f3f3f3" stroke="#8f8f8f"/>
<path d="M449 258 h8 M449 261 h8 M449 264 h8" stroke="#aaa" stroke-width="0.8"/>
</g>
<!-- paste -->
<rect x="477" y="250" width="15" height="16" rx="1.5" fill="#d9b45c" stroke="#9a7a2a"/>
<rect x="481" y="248" width="7" height="4" rx="1" fill="#e8e8e8" stroke="#777" stroke-width="0.8"/>
<rect x="483" y="255" width="13" height="12" fill="#fafafa" stroke="#8f8f8f"/>
<path d="M485 258.5 h9 M485 261.5 h9 M485 264.5 h9" stroke="#999" stroke-width="0.8"/>
<path d="M509.5 246 v22" stroke="#9e9d96" stroke-width="1"/>
<!-- find -->
<circle cx="531" cy="254.5" r="6.5" fill="#dfe9f7" stroke="#2a56b0" stroke-width="2.4"/>
<path d="M536 259.5 L543.5 267" stroke="#222" stroke-width="3.5" stroke-linecap="round"/>
<!-- replace -->
<circle cx="567" cy="254.5" r="6.5" fill="#dfe9f7" stroke="#2a56b0" stroke-width="2.4"/>
<path d="M572 259.5 L579.5 267" stroke="#222" stroke-width="3.5" stroke-linecap="round"/>
<path d="M563 263 L577 248" stroke="#f08a1c" stroke-width="3"/>
<path d="M577 248 L580 245" stroke="#d43a2a" stroke-width="3"/>
<path d="M561.5 265 L563.5 262" stroke="#333" stroke-width="1.5"/>
</svg>
<div class="a" style="left:796px;top:250px;font:normal 14px/14px 'Liberation Sans',sans-serif;color:#2e3436;white-space:pre;letter-spacing:0.188px;">Open</div>
<div class="a" style="left:899px;top:250px;font:normal 14px/14px 'Liberation Sans',sans-serif;color:#2e3436;white-space:pre;letter-spacing:-0.480px;">Save</div>
<div class="a" style="left:1029px;top:250px;font:normal 14px/14px 'Liberation Sans',sans-serif;color:#9b9b95;white-space:pre;letter-spacing:0.008px;">Undo</div>
<svg class="a" style="left:741px;top:284px" width="266" height="29" viewBox="0 0 266 29">
<defs><linearGradient id="tg72120" x1="0" x2="0" y1="0" y2="1"><stop offset="0" stop-color="#f7f7f7"/><stop offset="1" stop-color="#e9e9e9"/></linearGradient></defs>
<path d="M0.5 29 L3.5 4 Q4 1.5 7 1.5 L258 1.5 Q261 1.5 261.5 4 L265.5 29 Z" fill="url(#tg72120)" stroke="#b4b4b4" stroke-width="1"/>
</svg>
<svg class="a" style="left:758px;top:289px" width="14" height="17" viewBox="0 0 14 17">
<path d="M1.5 1.5 H9 L12.5 5 V15.5 H1.5 Z" fill="#fbfbfb" stroke="#8a8a8a" stroke-width="1"/>
<path d="M9 1.5 V5 H12.5" fill="#e0e0e0" stroke="#8a8a8a" stroke-width="1"/>
<circle cx="7" cy="10" r="3.2" fill="#6f8fc8" stroke="#3b5ea8" stroke-width="0.8"/>
<circle cx="7" cy="10" r="1.3" fill="#dfe8f7"/>
</svg>
<div class="a" style="left:777px;top:291px;font:normal 14px/14px 'Liberation Sans',sans-serif;color:#2e3436;white-space:pre;letter-spacing:0.530px;">class-wp-posts-list-table.php</div>
<svg class="a" style="left:1004px;top:284px" width="134" height="29" viewBox="0 0 134 29">
<defs><linearGradient id="tg721283" x1="0" x2="0" y1="0" y2="1"><stop offset="0" stop-color="#f7f7f7"/><stop offset="1" stop-color="#e9e9e9"/></linearGradient></defs>
<path d="M0.5 29 L3.5 4 Q4 1.5 7 1.5 L126 1.5 Q129 1.5 129.5 4 L133.5 29 Z" fill="url(#tg721283)" stroke="#b4b4b4" stroke-width="1"/>
</svg>
<svg class="a" style="left:1021px;top:289px" width="14" height="17" viewBox="0 0 14 17">
<path d="M1.5 1.5 H9 L12.5 5 V15.5 H1.5 Z" fill="#fbfbfb" stroke="#8a8a8a" stroke-width="1"/>
<path d="M9 1.5 V5 H12.5" fill="#e0e0e0" stroke="#8a8a8a" stroke-width="1"/>
<circle cx="7" cy="10" r="3.2" fill="#6f8fc8" stroke="#3b5ea8" stroke-width="0.8"/>
<circle cx="7" cy="10" r="1.3" fill="#dfe8f7"/>
</svg>
<div class="a" style="left:1040px;top:291px;font:normal 14px/14px 'Liberation Sans',sans-serif;color:#2e3436;white-space:pre;letter-spacing:0.273px;">sites.php</div>
<svg class="a" style="left:1137px;top:282px" width="287" height="33" viewBox="0 0 287 33">
<path d="M0.5 33 L3.5 5 Q4 1.5 8 1.5 L277 1.5 Q281 1.5 281.5 5 L286.5 33 Z" fill="#fdfdfd" stroke="#a9a9a9" stroke-width="1"/>
<path d="M3.8 4.5 Q4.5 1.5 8 1.5 L277 1.5 Q280.5 1.5 281.2 4.5" fill="none" stroke="#4a90d9" stroke-width="2.2"/>
</svg>
<svg class="a" style="left:1154px;top:289px" width="14" height="17" viewBox="0 0 14 17">
<path d="M1.5 1.5 H9 L12.5 5 V15.5 H1.5 Z" fill="#fbfbfb" stroke="#8a8a8a" stroke-width="1"/>
<path d="M9 1.5 V5 H12.5" fill="#e0e0e0" stroke="#8a8a8a" stroke-width="1"/>
<circle cx="7" cy="10" r="3.2" fill="#6f8fc8" stroke="#3b5ea8" stroke-width="0.8"/>
<circle cx="7" cy="10" r="1.3" fill="#dfe8f7"/>
</svg>
<div class="a" style="left:1173px;top:291px;font:normal 14px/14px 'Liberation Sans',sans-serif;color:#2e3436;white-space:pre;letter-spacing:0.522px;">class-wp-ms-sites-list-table.php</div>
<svg class="a" style="left:977px;top:292px" width="10" height="10" viewBox="0 0 10 10"><path d="M1 1 L9 9 M9 1 L1 9" stroke="#6e6e6e" stroke-width="2.4" stroke-linecap="round"/></svg>
<svg class="a" style="left:1106.5px;top:292px" width="10" height="10" viewBox="0 0 10 10"><path d="M1 1 L9 9 M9 1 L1 9" stroke="#6e6e6e" stroke-width="2.4" stroke-linecap="round"/></svg>
<svg class="a" style="left:1393px;top:292px" width="10" height="10" viewBox="0 0 10 10"><path d="M1 1 L9 9 M9 1 L1 9" stroke="#6e6e6e" stroke-width="2.4" stroke-linecap="round"/></svg>
<div class="a" style="left:1032px;top:1031px;font:normal 14px/14px 'Liberation Sans',sans-serif;color:#2e3436;white-space:pre;letter-spacing:-0.099px;">PHP</div>
<div class="a" style="left:1089px;top:1031px;font:normal 14px/14px 'Liberation Sans',sans-serif;color:#2e3436;white-space:pre;letter-spacing:0.407px;">Tab Width:  2</div>
<div class="a" style="left:1233px;top:1031px;font:normal 14px/14px 'Liberation Sans',sans-serif;color:#2e3436;white-space:pre;letter-spacing:0.423px;">Ln 305, Col 46</div>
<div class="a" style="left:1380px;top:1031px;font:normal 14px/14px 'Liberation Sans',sans-serif;color:#2e3436;white-space:pre;letter-spacing:-0.448px;">INS</div>
<svg class="a" style="left:721px;top:1030px" width="719" height="20" viewBox="0 1030 719 20">
<path d="M346.5 1035.5 L350.5 1039.5 L354.5 1035.5 M462 1035.5 L466 1039.5 L470 1035.5" stroke="#2e3436" stroke-width="1.7" fill="none"/>
<g fill="#b0b0b0"><rect x="713" y="1046" width="2" height="2"/><rect x="709" y="1046" width="2" height="2"/><rect x="705" y="1046" width="2" height="2"/><rect x="713" y="1042" width="2" height="2"/><rect x="709" y="1042" width="2" height="2"/><rect x="713" y="1038" width="2" height="2"/></g>
</svg>
<div class="a" style="left:1415px;top:1006px;width:24px;height:17px;background:#fbfbfb;"></div>
<svg class="a" style="left:1418px;top:316px" width="18" height="706" viewBox="0 316 18 706">
<rect x="0.5" y="318.5" width="16.5" height="16" rx="3" fill="#fff" stroke="#bdbdbd"/>
<path d="M5 328.5 L8.75 324.5 L12.5 328.5" stroke="#555" stroke-width="1.5" fill="none"/>
<rect x="0.5" y="886.5" width="16.5" height="57" rx="3" fill="#fdfdfd" stroke="#b4b4b4"/>
<rect x="0.5" y="987.5" width="16.5" height="17" rx="3" fill="#fff" stroke="#bdbdbd"/>
<path d="M5 994 L8.75 998 L12.5 994" stroke="#555" stroke-width="1.5" fill="none"/>
</svg>
<svg class="a" style="left:721px;top:286px" width="719" height="22" viewBox="721 286 719 22">
<path d="M733 289 L725.5 296.5 L733 304" stroke="#2e3436" stroke-width="2.6" fill="none"/>
<path d="M1430 289 L1437.5 296.5 L1430 304" stroke="#9a9a9a" stroke-width="2.6" fill="none"/>
</svg>
<div class="a" style="left:1440px;top:0px;width:1680px;height:1050px;background:#fff;"></div>
<div class="a" style="left:1440px;top:0px;width:1680px;height:25px;background:#efefef;"></div>
<div class="a" style="left:1440px;top:25px;width:1680px;height:1px;background:#a8a8a8;"></div>
<div class="a" style="left:1860px;top:0;width:540px;height:2.5px;background:linear-gradient(90deg,#f4f4f4 0.00%,#f4f4f4 4.63%,#8fd0f0 5.19%,#f4f4f4 5.93%,#f4f4f4 10.19%,#e05a20 10.37%,#e05a20 14.44%,#3a9a40 14.81%,#3a9a40 17.04%,#e02020 17.41%,#202020 18.15%,#202020 26.67%,#70c0e0 27.04%,#202020 27.78%,#e01c1c 28.52%,#e01c1c 35.19%,#f4f4f4 35.56%,#f4f4f4 36.67%,#f0d010 37.04%,#f0d010 52.78%,#303030 53.33%,#f0b000 54.07%,#e8501a 56.67%,#e03018 60.37%,#202020 61.11%,#e03018 62.22%,#e04a10 70.37%,#202020 71.11%,#f0a018 71.85%,#f0a018 82.41%,#28a0dc 82.96%,#28a0dc 89.26%,#70b8e0 89.63%,#70b8e0 99.07%,#efefef 99.44%)"></div>
<div class="a" style="left:1440px;top:26px;width:1680px;height:36px;background:linear-gradient(#f6ca3e,#f3c02a 40%,#efb70c);"></div>
<div class="a" style="left:1440px;top:61px;width:1680px;height:1px;background:#d8a80a;"></div>
<svg class="a" style="left:1440px;top:0" width="1010" height="26" viewBox="1440 0 1010 26"><defs><linearGradient id="ctin" x1="0" x2="0" y1="0" y2="1"><stop offset="0" stop-color="#f0dc9c"/><stop offset="1" stop-color="#dcae48"/></linearGradient><linearGradient id="ctac" x1="0" x2="0" y1="0" y2="1"><stop offset="0" stop-color="#fde991"/><stop offset="1" stop-color="#f6ca3e"/></linearGradient></defs><path d="M2221 25 L2229 4 Q2231 1.5 2234 1.5 L2408 1.5 Q2411 1.5 2413 4 L2425 25 Z" fill="url(#ctin)" stroke="#b38d3a" stroke-width="1"/><path d="M2027 25 L2035 4 Q2037 1.5 2040 1.5 L2212 1.5 Q2215 1.5 2217 4 L2229 25 Z" fill="url(#ctin)" stroke="#b38d3a" stroke-width="1"/><path d="M1832 25 L1840 4 Q1842 1.5 1845 1.5 L2018 1.5 Q2021 1.5 2023 4 L2035 25 Z" fill="url(#ctin)" stroke="#b38d3a" stroke-width="1"/><path d="M1640 25 L1648 4 Q1650 1.5 1653 1.5 L1823 1.5 Q1826 1.5 1828 4 L1840 25 Z" fill="url(#ctin)" stroke="#b38d3a" stroke-width="1"/><path d="M2424.5 6.5 L2442 6.5 Q2444.5 6.5 2445.5 9 L2450 21.5 L2432 21.5 Q2429.5 21.5 2428.5 19 Z" fill="#f5f5f5" stroke="#b8b8b8" stroke-width="1"/><path d="M2437 10 v8 M2433 14 h8" stroke="#9a9a9a" stroke-width="3"/><path d="M2437 10.5 v7 M2433.5 14 h7" stroke="#fff" stroke-width="1.2"/><path d="M1440 25.5 L1441 25 Q1446 24 1448 18 L1452 5 Q1453 1.5 1457 1.5 L1638 1.5 Q1641 1.5 1643 5 L1648 18 Q1650 24 1656 25 L1656 26 L1440 26 Z" fill="url(#ctac)" stroke="#c9a03a" stroke-width="1"/><rect x="1441" y="25" width="214" height="2" fill="#f6ca3e"/><path d="M2026 1 L2036 1 L2031 11 Z" fill="#e01c1c"/><path d="M2220 1 L2230 1 L2225 10 Z" fill="#e8501a"/></svg>
<svg class="a" style="left:1457px;top:6px" width="16" height="16" viewBox="0 0 16 16">
<circle cx="8" cy="8" r="7.3" fill="rgba(255,245,170,0.35)" stroke="#3a3418" stroke-width="1.3"/>
<path d="M3.3 4.2 Q6 2.2 9 3 L9.3 4.3 L8.2 5.5 L8.8 7 L7.4 8.4 L6 8 L5.6 9.3 L4.2 7.6 L3 6.8 Z" fill="rgba(70,58,15,0.5)"/>
<path d="M7 9.8 L9.6 10.4 L10.6 12 L9.4 14.4 L8.4 14.3 L8 12.3 L7 11 Z" fill="rgba(70,58,15,0.5)"/>
<path d="M10.8 4 L12.6 4.8 L13.8 7 L13.6 9.6 L12.2 10.2 L11.6 8.2 L10.6 7 L11.4 5.6 Z" fill="rgba(70,58,15,0.5)"/>
</svg>
<div class="a" style="left:1477px;top:8px;font:normal 11.6px/11.6px 'Liberation Sans',sans-serif;color:#1a1a1a;white-space:pre;-webkit-mask-image:linear-gradient(90deg,#000 85%,transparent 100%);width:140px;overflow:hiddenletter-spacing:-0.092px;">All Chinese Clinic Sessions</div>
<svg class="a" style="left:1627px;top:10px" width="8" height="8" viewBox="0 0 10 10"><path d="M1 1 L9 9 M9 1 L1 9" stroke="#8a7a40" stroke-width="1.4" stroke-linecap="round"/></svg>
<svg class="a" style="left:1650px;top:6px" width="16" height="16" viewBox="0 0 16 16">
<circle cx="8" cy="8" r="7.3" fill="rgba(255,245,170,0.35)" stroke="#3a3418" stroke-width="1.3"/>
<path d="M3.3 4.2 Q6 2.2 9 3 L9.3 4.3 L8.2 5.5 L8.8 7 L7.4 8.4 L6 8 L5.6 9.3 L4.2 7.6 L3 6.8 Z" fill="rgba(70,58,15,0.5)"/>
<path d="M7 9.8 L9.6 10.4 L10.6 12 L9.4 14.4 L8.4 14.3 L8 12.3 L7 11 Z" fill="rgba(70,58,15,0.5)"/>
<path d="M10.8 4 L12.6 4.8 L13.8 7 L13.6 9.6 L12.2 10.2 L11.6 8.2 L10.6 7 L11.4 5.6 Z" fill="rgba(70,58,15,0.5)"/>
</svg>
<svg class="a" style="left:1672px;top:7px" width="48" height="12" viewBox="0 0 48 12" fill="none" stroke="#2a2a2a" stroke-width="1.1"><path transform="translate(0,0)" d="M1 2h4M3 2v9M1 6h4M1 10h4M6 1h5M8.5 1v10M6 5h5M6 8h5"/><path transform="translate(12,0)" d="M3 1l-2 5M2 4v7M6 1v2M5 4l5 7M10 4l-5 7"/><path transform="translate(24,0)" d="M1 3h4M3 1v10M1 7h4M6 2h5M7 2v9M10 2v9M6 6h5M6 10h5"/><path transform="translate(36,0)" d="M5 1l1 2M1 4h10M2 4v7M2 7h8M10 4v3"/></svg>
<div class="a" style="left:1720px;top:8px;font:normal 11.6px/11.6px 'Liberation Sans',sans-serif;color:#2a2a2a;white-space:pre;width:100px;overflow:hidden;-webkit-mask-image:linear-gradient(90deg,#000 80%,transparent 100%)">‹ Doggie! — WordPress</div>
<svg class="a" style="left:1821px;top:10px" width="8" height="8" viewBox="0 0 10 10"><path d="M1 1 L9 9 M9 1 L1 9" stroke="#8a7a40" stroke-width="1.4" stroke-linecap="round"/></svg>
<svg class="a" style="left:1843px;top:6px" width="16" height="16" viewBox="0 0 16 16">
<circle cx="8" cy="8" r="7.3" fill="rgba(255,245,170,0.35)" stroke="#3a3418" stroke-width="1.3"/>
<path d="M3.3 4.2 Q6 2.2 9 3 L9.3 4.3 L8.2 5.5 L8.8 7 L7.4 8.4 L6 8 L5.6 9.3 L4.2 7.6 L3 6.8 Z" fill="rgba(70,58,15,0.5)"/>
<path d="M7 9.8 L9.6 10.4 L10.6 12 L9.4 14.4 L8.4 14.3 L8 12.3 L7 11 Z" fill="rgba(70,58,15,0.5)"/>
<path d="M10.8 4 L12.6 4.8 L13.8 7 L13.6 9.6 L12.2 10.2 L11.6 8.2 L10.6 7 L11.4 5.6 Z" fill="rgba(70,58,15,0.5)"/>
</svg>
<svg class="a" style="left:1865px;top:7px" width="36" height="12" viewBox="0 0 36 12" fill="none" stroke="#2a2a2a" stroke-width="1.1"><path transform="translate(0,0)" d="M3 1l-2 5M2 4v7M6 1v2M5 4l5 7M10 4l-5 7"/><path transform="translate(12,0)" d="M3 2h6M2 5h8M4 1v4M8 1v4M1 7h10M2 7v4h8v-4M5 7v4M7 7v4"/><path transform="translate(24,0)" d="M1 2h4M3 2v9M1 6h4M1 10h4M6 1h5M8.5 1v10M6 5h5M6 8h5"/></svg>
<div class="a" style="left:1904px;top:8px;font:normal 11.6px/11.6px 'Liberation Sans',sans-serif;color:#2a2a2a;white-space:pre;width:110px;overflow:hidden;-webkit-mask-image:linear-gradient(90deg,#000 80%,transparent 100%)">‹ Doggie! — WordPress</div>
<svg class="a" style="left:2016px;top:10px" width="8" height="8" viewBox="0 0 10 10"><path d="M1 1 L9 9 M9 1 L1 9" stroke="#8a7a40" stroke-width="1.4" stroke-linecap="round"/></svg>
<svg class="a" style="left:2039px;top:6px" width="15" height="15" viewBox="0 0 15 15">
<g fill="#b5262a"><ellipse cx="7.5" cy="10" rx="3.6" ry="3"/><ellipse cx="3" cy="6.5" rx="1.6" ry="2"/><ellipse cx="12" cy="6.5" rx="1.6" ry="2"/><ellipse cx="5.5" cy="3" rx="1.5" ry="2"/><ellipse cx="9.5" cy="3" rx="1.5" ry="2"/></g>
</svg>
<div class="a" style="left:2060px;top:8px;font:normal 11.6px/11.6px 'Liberation Sans',sans-serif;color:#2a2a2a;white-space:pre;width:142px;overflow:hidden;-webkit-mask-image:linear-gradient(90deg,#000 85%,transparent 100%)">{1} All Tickets — WordPress</div>
<svg class="a" style="left:2210px;top:10px" width="8" height="8" viewBox="0 0 10 10"><path d="M1 1 L9 9 M9 1 L1 9" stroke="#8a7a40" stroke-width="1.4" stroke-linecap="round"/></svg>
<svg class="a" style="left:2233px;top:6px" width="15" height="15" viewBox="0 0 15 15">
<g fill="#b5262a"><ellipse cx="7.5" cy="10" rx="3.6" ry="3"/><ellipse cx="3" cy="6.5" rx="1.6" ry="2"/><ellipse cx="12" cy="6.5" rx="1.6" ry="2"/><ellipse cx="5.5" cy="3" rx="1.5" ry="2"/><ellipse cx="9.5" cy="3" rx="1.5" ry="2"/></g>
</svg>
<div class="a" style="left:2253px;top:8px;font:normal 11.6px/11.6px 'Liberation Sans',sans-serif;color:#2a2a2a;white-space:pre;width:142px;overflow:hidden;-webkit-mask-image:linear-gradient(90deg,#000 85%,transparent 100%)">#8759 (Word count function</div>
<svg class="a" style="left:2403px;top:10px" width="8" height="8" viewBox="0 0 10 10"><path d="M1 1 L9 9 M9 1 L1 9" stroke="#8a7a40" stroke-width="1.4" stroke-linecap="round"/></svg>
<svg class="a" style="left:3040px;top:0" width="80" height="25" viewBox="3040 0 80 25">
<rect x="3042.5" y="2.5" width="23" height="17" rx="2" fill="#f3f3f3" stroke="#c4c4c4"/>
<rect x="3068.5" y="2.5" width="23" height="17" rx="2" fill="#f3f3f3" stroke="#c4c4c4"/>
<rect x="3094.5" y="2.5" width="23" height="17" rx="2" fill="#f3f3f3" stroke="#c4c4c4"/>
<rect x="3048.5" y="11.3" width="11" height="3" rx="1.5" fill="#fff" stroke="#aaa" stroke-width="1"/>
<path d="M3078 7.5 h6.5 v5.5 h-2" fill="none" stroke="#aaa" stroke-width="2.4"/>
<rect x="3075.8" y="10" width="6" height="5" fill="#fff" stroke="#aaa" stroke-width="2.2"/>
<path d="M3102 7 L3110 15 M3110 7 L3102 15" stroke="#aaa" stroke-width="3.4" stroke-linecap="round"/>
<path d="M3102 7 L3110 15 M3110 7 L3102 15" stroke="#fff" stroke-width="1.6" stroke-linecap="round"/>
<path d="M3083 25 L3088.5 0 M3094.5 25 L3099.5 0 M3116 25 L3120 8" stroke="#62b6e0" stroke-width="1.2" fill="none"/>
<path d="M3114 0 L3120 0 L3120 7 Q3116 4 3114 0 Z" fill="#e85a20" stroke="#222" stroke-width="0.6"/>
</svg>
<svg class="a" style="left:1445px;top:30px" width="85" height="28" viewBox="1445 30 85 28">
<path d="M1457.5 37.5 L1451 44 L1457.5 50.5 M1451.5 44 H1464" stroke="#4a4a45" stroke-width="3" fill="none" stroke-linejoin="round"/>
<path d="M1486 37.5 L1492.5 44 L1486 50.5 M1492 44 H1479.5" stroke="#e8b53a" stroke-width="3" fill="none" stroke-linejoin="round"/>
<path d="M1520 44.5 A6.3 6.3 0 1 1 1517.5 38.6" stroke="#4a4a45" stroke-width="3" fill="none"/>
<path d="M1513.8 36.2 L1521.8 34.8 L1520.8 42.8 Z" fill="#4a4a45"/>
</svg>
<div class="a" style="left:1531px;top:30px;width:1430px;height:27px;background:#d9a300;border-radius:5px;"></div>
<div class="a" style="left:1532px;top:31px;width:1428px;height:25px;background:#fff;border-radius:4px;"></div>
<svg class="a" style="left:1537px;top:36px" width="15" height="15" viewBox="0 0 16 16">
<circle cx="8" cy="8" r="7.3" fill="#f2f2f2" stroke="#8c8c8c" stroke-width="1.3"/>
<path d="M3.3 4.2 Q6 2.2 9 3 L9.3 4.3 L8.2 5.5 L8.8 7 L7.4 8.4 L6 8 L5.6 9.3 L4.2 7.6 L3 6.8 Z" fill="rgba(140,140,140,0.6)"/>
<path d="M7 9.8 L9.6 10.4 L10.6 12 L9.4 14.4 L8.4 14.3 L8 12.3 L7 11 Z" fill="rgba(140,140,140,0.6)"/>
<path d="M10.8 4 L12.6 4.8 L13.8 7 L13.6 9.6 L12.2 10.2 L11.6 8.2 L10.6 7 L11.4 5.6 Z" fill="rgba(140,140,140,0.6)"/>
</svg>
<div class="a" style="left:1557px;top:36px;font:14px/17px 'Liberation Sans',sans-serif;white-space:pre;color:#000">club.jiehan-tpx300.jiehan.org<span style="color:#7a7a7a">/wp-admin/admin.php?page=chinese_clinic_sessions</span></div>
<svg class="a" style="left:2936px;top:33px" width="22" height="20" viewBox="0 0 22 20">
<path d="M11 1.5 L13.6 7.3 L19.8 7.8 L15 11.8 L16.5 17.9 L11 14.6 L5.5 17.9 L7 11.8 L2.2 7.8 L8.4 7.3 Z" fill="#fff" stroke="#4d5a78" stroke-width="1.8" stroke-linejoin="round"/>
</svg>
<svg class="a" style="left:2965px;top:32px" width="155" height="28" viewBox="2965 32 155 28">
<rect x="2969" y="36" width="19" height="14" fill="#e8e8e8" stroke="#6a6a6a" stroke-width="1.6"/>
<path d="M2969.5 36.5 L2978.5 44 L2987.5 36.5" stroke="#6a6a6a" stroke-width="2.2" fill="none"/>
<rect x="2981" y="45" width="10" height="11" rx="2" fill="#8d8a80"/><text x="2986" y="54.5" font-family="Liberation Sans" font-weight="bold" font-size="10" fill="#fff" text-anchor="middle">?</text>
<rect x="3001" y="36" width="14" height="12" rx="1.5" fill="#dfe8f3" stroke="#4a86c8" stroke-width="1.2"/>
<rect x="3001" y="36" width="14" height="3" fill="#3a78c0"/>
<path d="M3006 42 h4 l-2 2z" fill="#d42020"/>
<rect x="3007" y="47" width="15" height="10" rx="1.5" fill="#0a1e9a"/><text x="3014.5" y="55.5" font-family="Liberation Sans" font-weight="bold" font-size="9" fill="#fff" text-anchor="middle">4d</text>
<path d="M3040 36 a9 7 0 1 1 -4 12 l-4 2.5 2 -4 a9 7 0 0 1 6 -10.5z" fill="#fafafa" stroke="#9a9a9a" stroke-width="1"/>
<path d="M3036.5 39.5 q0 5 5 7 l1.5 -1.5 -2 -2 -1.2 1 q-1.6 -1 -2 -3 l1 -1 -1.5 -2z" fill="#333"/>
<rect x="3046" y="45" width="10" height="11" rx="2" fill="#8d8a80"/><text x="3051" y="54.5" font-family="Liberation Sans" font-weight="bold" font-size="10" fill="#fff" text-anchor="middle">?</text>
<rect x="3062" y="35" width="14" height="11" fill="#c8dcf0" stroke="#2a6aa8" stroke-width="1.2"/>
<rect x="3066" y="40" width="15" height="12" fill="#48a8e0" stroke="#1a80c8" stroke-width="1.2"/>
<path d="M3067 50 q3 -5 7 -3 q3 1 6 -1 v5 h-13z" fill="#1a6ab0"/>
<path d="M3097 38 a4 4 0 0 0 4 5.5 l7.5 7.5 2.2 -2.2 -7.5 -7.5 a4 4 0 0 0 -5.5 -4 l2.2 2.2 -1 2 -2 .6z" fill="#4a4638"/>
</svg>
<div class="a" style="left:1440px;top:62px;width:1680px;height:28px;background:linear-gradient(#474747,#404040);"></div>
<div class="a" style="left:1485px;top:62px;width:1px;height:28px;background:#555;box-shadow:-1px 0 0 #333;"></div>
<div class="a" style="left:1678px;top:62px;width:1px;height:28px;background:#555;box-shadow:-1px 0 0 #333;"></div>
<div class="a" style="left:1720px;top:62px;width:1px;height:28px;background:#555;box-shadow:-1px 0 0 #333;"></div>
<div class="a" style="left:2955px;top:62px;width:1px;height:28px;background:#555;box-shadow:-1px 0 0 #333;"></div>
<svg class="a" style="left:1452px;top:65px" width="22" height="22" viewBox="0 0 22 22">
<circle cx="11" cy="11" r="9.6" fill="none" stroke="#c4c4c4" stroke-width="1.1"/>
<circle cx="11" cy="11" r="7.9" fill="#bdbdbd"/>
<path d="M4.2 7.6 h4.2 v0.9 h-1 l2.6 7.4 l1.6 -4.6 l-1 -2.8 h-0.8 v-0.9 h4.2 v0.9 h-1 l2.6 7.4 l2 -6.2 q0.2 -1.2 -1 -1.2 v-0.9 h2.2 l-3.8 10.8 h-0.8 l-2.2 -6.2 l-2.2 6.2 h-0.8 l-3.6 -10.4 h-1 z" fill="#474747"/>
</svg>
<div class="a" style="left:1499px;top:69px;font:normal 13px/13px 'Liberation Sans',sans-serif;color:#cccccc;white-space:pre;letter-spacing:-0.098px;">Peddie Chinese Culture Club</div>
<svg class="a" style="left:1690px;top:69px" width="18" height="17" viewBox="0 0 18 17">
<path d="M9 1.5 C13.5 1.5 16.5 4 16.5 7 C16.5 10 13.5 12.3 9.5 12.3 L6 15.5 L6.5 12 C3.5 11.3 1.5 9.5 1.5 7 C1.5 4 4.5 1.5 9 1.5Z" fill="#bbbbbb"/>
</svg>
<svg class="a" style="left:1733px;top:70px" width="13" height="13" viewBox="0 0 13 13"><path d="M6.5 0.5 v12 M0.5 6.5 h12" stroke="#bbbbbb" stroke-width="3"/></svg>
<div class="a" style="left:1753px;top:69px;font:normal 13px/13px 'Liberation Sans',sans-serif;color:#cccccc;white-space:pre;letter-spacing:-0.339px;">New</div>
<div class="a" style="left:2968px;top:69px;font:normal 13px/13px 'Liberation Sans',sans-serif;color:#cccccc;white-space:pre;letter-spacing:-0.090px;">Howdy, jiehanzheng</div>
<svg class="a" style="left:3090px;top:67px" width="18" height="18" viewBox="0 0 18 18">
<rect x="0.5" y="0.5" width="17" height="17" fill="#e8e0d0" stroke="#999"/>
<rect x="2" y="2" width="14" height="15" fill="#d8e4ea"/>
<ellipse cx="9.5" cy="7" rx="3.6" ry="4" fill="#c89878"/>
<path d="M5.5 6 q0.5 -4.5 4.5 -4.5 q4 0 4 4.5 q-2 -2 -8.5 0z" fill="#1a1a1a"/>
<path d="M3 17 q1 -5 6.5 -5.5 q5.5 0.5 6.5 5.5z" fill="#9cc0e0"/>
<path d="M9.5 12 v5" stroke="#304070" stroke-width="1.2"/>
</svg>
<div class="a" style="left:1440px;top:90px;width:146px;height:960px;background:#ececec;"></div>
<div class="a" style="left:1578px;top:90px;width:8px;height:960px;background:linear-gradient(90deg,rgba(0,0,0,0),rgba(0,0,0,0.09));"></div>
<div class="a" style="left:1585px;top:90px;width:1px;height:960px;background:#d1d1d1;"></div>
<div class="a" style="left:1440px;top:91px;width:146px;height:29px;border-top:1px solid #f9f9f9;border-bottom:1px solid #d8d8d8;box-sizing:border-box;"></div>
<div class="a" style="left:1468px;top:98px;font:bold 13px/13px 'Liberation Sans',sans-serif;color:#21759b;white-space:pre;text-shadow:0 1px 0 #fff;">Dashboard</div>
<div class="a" style="left:1440px;top:125px;width:146px;height:30px;border-top:1px solid #f9f9f9;border-bottom:1px solid #d8d8d8;box-sizing:border-box;"></div>
<div class="a" style="left:1468px;top:133px;font:bold 13px/13px 'Liberation Sans',sans-serif;color:#21759b;white-space:pre;text-shadow:0 1px 0 #fff;">Posts</div>
<div class="a" style="left:1440px;top:155px;width:146px;height:30px;border-top:1px solid #f9f9f9;border-bottom:1px solid #d8d8d8;box-sizing:border-box;"></div>
<div class="a" style="left:1468px;top:163px;font:bold 13px/13px 'Liberation Sans',sans-serif;color:#21759b;white-space:pre;text-shadow:0 1px 0 #fff;">Media</div>
<div class="a" style="left:1440px;top:185px;width:146px;height:30px;border-top:1px solid #f9f9f9;border-bottom:1px solid #d8d8d8;box-sizing:border-box;"></div>
<div class="a" style="left:1468px;top:193px;font:bold 13px/13px 'Liberation Sans',sans-serif;color:#21759b;white-space:pre;text-shadow:0 1px 0 #fff;">Links</div>
<div class="a" style="left:1440px;top:215px;width:146px;height:30px;border-top:1px solid #f9f9f9;border-bottom:1px solid #d8d8d8;box-sizing:border-box;"></div>
<div class="a" style="left:1468px;top:223px;font:bold 13px/13px 'Liberation Sans',sans-serif;color:#21759b;white-space:pre;text-shadow:0 1px 0 #fff;">Pages</div>
<div class="a" style="left:1440px;top:245px;width:146px;height:30px;border-top:1px solid #f9f9f9;border-bottom:1px solid #d8d8d8;box-sizing:border-box;"></div>
<div class="a" style="left:1468px;top:253px;font:bold 13px/13px 'Liberation Sans',sans-serif;color:#21759b;white-space:pre;text-shadow:0 1px 0 #fff;">Comments</div>
<div class="a" style="left:1440px;top:363px;width:146px;height:30px;border-top:1px solid #f9f9f9;border-bottom:1px solid #d8d8d8;box-sizing:border-box;"></div>
<div class="a" style="left:1468px;top:372px;font:bold 13px/13px 'Liberation Sans',sans-serif;color:#21759b;white-space:pre;text-shadow:0 1px 0 #fff;">Appearance</div>
<div class="a" style="left:1440px;top:393px;width:146px;height:30px;border-top:1px solid #f9f9f9;border-bottom:1px solid #d8d8d8;box-sizing:border-box;"></div>
<div class="a" style="left:1468px;top:402px;font:bold 13px/13px 'Liberation Sans',sans-serif;color:#21759b;white-space:pre;text-shadow:0 1px 0 #fff;">Plugins</div>
<div class="a" style="left:1440px;top:423px;width:146px;height:30px;border-top:1px solid #f9f9f9;border-bottom:1px solid #d8d8d8;box-sizing:border-box;"></div>
<div class="a" style="left:1468px;top:432px;font:bold 13px/13px 'Liberation Sans',sans-serif;color:#21759b;white-space:pre;text-shadow:0 1px 0 #fff;">Users</div>
<div class="a" style="left:1440px;top:453px;width:146px;height:30px;border-top:1px solid #f9f9f9;border-bottom:1px solid #d8d8d8;box-sizing:border-box;"></div>
<div class="a" style="left:1468px;top:462px;font:bold 13px/13px 'Liberation Sans',sans-serif;color:#21759b;white-space:pre;text-shadow:0 1px 0 #fff;">Tools</div>
<div class="a" style="left:1440px;top:483px;width:146px;height:30px;border-top:1px solid #f9f9f9;border-bottom:1px solid #d8d8d8;box-sizing:border-box;"></div>
<div class="a" style="left:1468px;top:492px;font:bold 13px/13px 'Liberation Sans',sans-serif;color:#21759b;white-space:pre;text-shadow:0 1px 0 #fff;">Settings</div>
<div class="a" style="left:1440px;top:120px;width:146px;height:5px;background:linear-gradient(#dcdcdc,#dcdcdc 20%,#f6f6f6 20%,#f6f6f6 60%,#cfcfcf 60%,#cfcfcf 80%,#e4e4e4 80%);"></div>
<div class="a" style="left:1440px;top:357px;width:146px;height:5px;background:linear-gradient(#dcdcdc,#dcdcdc 20%,#f6f6f6 20%,#f6f6f6 60%,#cfcfcf 60%,#cfcfcf 80%,#e4e4e4 80%);"></div>
<svg class="a" style="left:1440px;top:275px" width="160" height="30" viewBox="1440 275 160 30">
<defs><linearGradient id="actg" x1="0" x2="0" y1="0" y2="1"><stop offset="0" stop-color="#7a7a7a"/><stop offset="1" stop-color="#6d6d6d"/></linearGradient></defs>
<path d="M1440 275 H1585.5 L1595 290 L1585.5 305 H1440 Z" fill="url(#actg)"/>
</svg>
<svg class="a" style="left:1446.5px;top:281.5px" width="17" height="17" viewBox="0 0 17 17">
<path d="M7.13 2.35 L7.48 0.67 L9.52 0.67 L9.87 2.35 L11.88 3.18 L13.31 2.24 L14.76 3.69 L13.82 5.12 L14.65 7.13 L16.33 7.48 L16.33 9.52 L14.65 9.87 L13.82 11.88 L14.76 13.31 L13.31 14.76 L11.88 13.82 L9.87 14.65 L9.52 16.33 L7.48 16.33 L7.13 14.65 L5.12 13.82 L3.69 14.76 L2.24 13.31 L3.18 11.88 L2.35 9.87 L0.67 9.52 L0.67 7.48 L2.35 7.13 L3.18 5.12 L2.24 3.69 L3.69 2.24 L5.12 3.18 Z" fill="#eef0fa" stroke="#34589a" stroke-width="1" stroke-linejoin="round"/>
<circle cx="8.5" cy="8.5" r="3.4" fill="none" stroke="#a4b0dc" stroke-width="1.2"/>
<circle cx="8.5" cy="8.5" r="1.5" fill="#3c4a70"/>
</svg>
<div class="a" style="left:1468px;top:283px;font:bold 13px/13px 'Liberation Sans',sans-serif;color:#ffffff;white-space:pre;text-shadow:0 -1px 0 #555;">Chinese Clinic</div>
<div class="a" style="left:1440px;top:305px;width:146px;height:53px;background:#fff;"></div>
<div class="a" style="left:1578px;top:305px;width:8px;height:53px;background:linear-gradient(90deg,rgba(0,0,0,0),rgba(0,0,0,0.07));"></div>
<div class="a" style="left:1452px;top:314px;font:bold 12px/12px 'Liberation Sans',sans-serif;color:#333333;white-space:pre;">Sessions</div>
<div class="a" style="left:1452px;top:336px;font:normal 12px/12px 'Liberation Sans',sans-serif;color:#21759b;white-space:pre;">Tutors</div>
<svg class="a" style="left:1445px;top:520px" width="18" height="18" viewBox="0 0 18 18">
<circle cx="9" cy="9" r="8" fill="#f4f4f4" stroke="#c8c8c8"/>
<path d="M11 5.5 L6 9 L11 12.5 Z" fill="#aaaaaa"/>
</svg>
<div class="a" style="left:1470px;top:523px;font:normal 13px/13px 'Liberation Sans',sans-serif;color:#aaaaaa;white-space:pre;letter-spacing:-0.209px;">Collapse menu</div>
<svg class="a" style="left:1444px;top:90px" width="24" height="440" viewBox="1444 90 24 440" fill="#f2f2f2" stroke="#777" stroke-width="1" stroke-linejoin="round">
<!-- dashboard house -->
<path d="M1447 105.5 L1455 98.5 L1463 105.5 L1461 105.5 L1461 112.5 L1449 112.5 L1449 105.5 Z"/>
<path d="M1453 112.5 V107.5 H1457 V112.5" fill="none"/>
<path d="M1459 100 V103" fill="none"/>
<!-- posts pin -->
<path d="M1454 133.5 L1461.5 141 L1459.8 142.2 L1452.8 135.2 Z"/>
<path d="M1455 136.5 L1458.5 140 L1455.8 144 L1450.8 139 Z"/>
<path d="M1452 141.8 L1447 147" fill="none" stroke-width="1.2"/>
<!-- media -->
<rect x="1447.5" y="164.5" width="11" height="8" rx="1"/>
<path d="M1448.5 164.5 v-1.5 h3 v1.5" fill="none"/>
<circle cx="1452.5" cy="168.5" r="2.2"/>
<path d="M1455.5 176 V168.5 H1460.5 V176 M1455.5 170.3 H1460.5" fill="none"/>
<circle cx="1454.2" cy="176.3" r="1.5"/><circle cx="1459.2" cy="176.3" r="1.5"/>
<!-- links -->
<g transform="rotate(-45 1454 198)"><rect x="1444" y="195" width="10.5" height="6" rx="3" fill="none" stroke-width="1.6"/><rect x="1453.5" y="195" width="10.5" height="6" rx="3" fill="none" stroke-width="1.6"/><path d="M1449 198 h10" stroke-width="1.6"/></g>
<!-- pages -->
<rect x="1448.5" y="224.5" width="9" height="12" rx="1"/>
<rect x="1452.5" y="222.5" width="9" height="12" rx="0.8" fill="#fafafa"/>
<path d="M1454.5 225 h5 M1454.5 227 h5 M1454.5 229 h5 M1454.5 231 h5" stroke="#aaa" stroke-width="0.8"/>
<!-- comments -->
<path d="M1455.3 252 c4 0 7 2.1 7 4.8 s-3 4.8 -7 4.8 c-0.8 0 -1.6 -0.1 -2.3 -0.3 l-1.6 4.2 l-0.3 -5.2 c-1.7 -0.9 -2.8 -2.1 -2.8 -3.5 c0 -2.7 3 -4.8 7 -4.8z"/>
<!-- appearance -->
<rect x="1447.5" y="370.5" width="14" height="14" rx="1"/>
<path d="M1447.5 373.5 h14" fill="none"/>
<rect x="1449.5" y="376" width="3.5" height="2.5" fill="none" stroke-width="0.9"/><rect x="1449.5" y="379.5" width="3.5" height="2.5" fill="none" stroke-width="0.9"/><rect x="1454.5" y="376" width="5" height="6" fill="none" stroke-width="0.9"/>
<!-- plugins -->
<path d="M1451 406 L1456.5 400.5 L1461 405 L1455.5 410.5 Q1452 412 1450 410 Q1449.5 408 1451 406 Z"/>
<path d="M1455 400.5 L1458.5 397 M1459 404.5 L1462.5 401" fill="none" stroke-width="1.3"/>
<path d="M1450.5 410.5 L1446.5 414.5" fill="none" stroke-width="1.6"/>
<!-- users -->
<circle cx="1450.5" cy="432" r="2.6"/>
<path d="M1446 440.5 c0 -3 1.8 -4.8 4.5 -4.8 s3.5 1 4 2" />
<circle cx="1457" cy="433" r="3"/>
<path d="M1451 443.5 c0 -3.5 2.5 -5.5 6 -5.5 s6 2 6 5.5 c-1.5 1.2 -10.5 1.2 -12 0z"/>
<!-- tools -->
<path d="M1446.5 460 h7 v2 h-2.5 v10.5 h-2 v-10.5 h-2.5 z"/>
<path d="M1459.5 458.5 v5" fill="none" stroke-width="1.2"/>
<rect x="1458" y="463.5" width="3" height="9" rx="1.2"/>
<!-- settings -->
<rect x="1447.5" y="489.5" width="15" height="15" rx="1"/>
<path d="M1451.5 492 v7.5 M1458.5 494.5 v8" fill="none" stroke-width="1.1"/>
<circle cx="1451.5" cy="501" r="1.4" fill="none"/><circle cx="1458.5" cy="493.5" r="1.4" fill="none"/>
</svg>
<svg class="a" style="left:1605px;top:102px" width="36" height="35" viewBox="0 0 36 35">
<defs><radialGradient id="uhg" cx="0.45" cy="0.3" r="0.75"><stop offset="0" stop-color="#fbfbfb"/><stop offset="0.6" stop-color="#d8d8d8"/><stop offset="1" stop-color="#bcbcbc"/></radialGradient></defs>
<ellipse cx="10" cy="6.5" rx="3.6" ry="4.6" fill="url(#uhg)" stroke="#7a7a7a" stroke-width="0.7"/>
<path d="M1.5 21 c0 -6 3.5 -9 8.5 -9 s6.5 2 7.5 4 l-3 5z" fill="url(#uhg)" stroke="#7a7a7a" stroke-width="0.7"/>
<ellipse cx="19.5" cy="7.5" rx="5.6" ry="7" fill="url(#uhg)" stroke="#7a7a7a" stroke-width="0.7"/>
<path d="M8.5 27.5 c0 -7 5 -11.5 11 -11.5 s11.5 4.5 11.5 11.5 c-1.5 3.5 -6 5.5 -11.5 5.5 s-10 -2 -11 -5.5z" fill="url(#uhg)" stroke="#7a7a7a" stroke-width="0.7"/>
</svg>
<div class="a" style="left:1650px;top:106px;font:normal 23px/23px 'Liberation Sans',sans-serif;color:#333333;white-space:pre;letter-spacing:0.205px;">List Table Test</div>
<div class="a" style="left:1605px;top:141px;width:1500px;height:116px;background:#ececec;border:1px solid #cccccc;border-radius:5px;box-sizing:border-box;"></div>
<div class="a" style="left:1616px;top:156px;font:12px/12px 'Liberation Sans',sans-serif;color:#333;white-space:pre;letter-spacing:0.15px">This page demonstrates the use of the <span style="font-family:'Liberation Mono',monospace;font-size:11.7px;color:#21759b;letter-spacing:0">WP_List_Table</span> class in plugins.</div>
<div class="a" style="left:1616px;top:184px;font:12px/12px 'Liberation Sans',sans-serif;color:#333;white-space:pre;letter-spacing:0.15px">For a detailed explanation of using the <span style="font-family:'Liberation Mono',monospace;font-size:11.7px;color:#21759b;letter-spacing:0">WP_List_Table</span> class in your own plugins, you can view this file <span style="color:#21759b">in the Plugin Editor</span> or simply open <span style="font-family:'Liberation Mono',monospace;font-size:11.65px;color:#777;letter-spacing:0">/srv/www/chinese-club/public_html/wp-content/plugins/peddie-chinese-clinic/peddie-chinese-clinic.php</span> in</div>
<div class="a" style="left:1616px;top:201px;font:12px/12px 'Liberation Sans',sans-serif;color:#333;white-space:pre;letter-spacing:0.15px">the PHP editor of your choice.</div>
<div class="a" style="left:1616px;top:230px;font:12px/12px 'Liberation Sans',sans-serif;color:#333;white-space:pre;letter-spacing:0.15px">Additional class details are available on the <span style="color:#21759b">WordPress Codex</span>.</div>
<div class="a" style="left:1094px;width:2000px;top:272px;font:italic normal 12px/12px 'Liberation Serif',serif;color:#555555;text-align:right;white-space:pre;">2 items</div>
<div class="a" style="left:1605px;top:297px;width:1500px;height:154px;background:#f9f9f9;border:1px solid #dfdfdf;border-radius:3px;box-sizing:border-box;"></div>
<div class="a" style="left:1606px;top:298px;width:1498px;height:35px;background:linear-gradient(#f9f9f9,#ececec);border-bottom:1px solid #dfdfdf;box-sizing:border-box;border-radius:3px 3px 0 0;"></div>
<div class="a" style="left:1606px;top:374px;width:1498px;height:1px;background:#dfdfdf;"></div>
<div class="a" style="left:1606px;top:416px;width:1498px;height:35px;background:linear-gradient(#f9f9f9,#ececec);border-top:1px solid #dfdfdf;box-sizing:border-box;border-radius:0 0 3px 3px;"></div>
<div class="a" style="left:1606px;top:333px;width:1498px;height:41px;background:#fcfcfc;"></div>
<div class="a" style="left:1606px;top:375px;width:1498px;height:41px;background:#f9f9f9;"></div>
<div class="a" style="left:1614px;top:309px;font:normal 14px/14px 'Liberation Serif',serif;color:#21759b;white-space:pre;text-shadow:0 1px 0 #fff;letter-spacing:-0.016px;">Time</div>
<div class="a" style="left:2111px;top:309px;font:normal 14px/14px 'Liberation Serif',serif;color:#333333;white-space:pre;text-shadow:0 1px 0 #fff;letter-spacing:-0.033px;">Location</div>
<div class="a" style="left:2611px;top:309px;font:normal 14px/14px 'Liberation Serif',serif;color:#333333;white-space:pre;text-shadow:0 1px 0 #fff;letter-spacing:-0.009px;">Participants</div>
<div class="a" style="left:1614px;top:428px;font:normal 14px/14px 'Liberation Serif',serif;color:#21759b;white-space:pre;text-shadow:0 1px 0 #fff;letter-spacing:-0.016px;">Time</div>
<div class="a" style="left:2111px;top:428px;font:normal 14px/14px 'Liberation Serif',serif;color:#333333;white-space:pre;text-shadow:0 1px 0 #fff;letter-spacing:-0.033px;">Location</div>
<div class="a" style="left:2611px;top:428px;font:normal 14px/14px 'Liberation Serif',serif;color:#333333;white-space:pre;text-shadow:0 1px 0 #fff;letter-spacing:-0.009px;">Participants</div>
<div class="a" style="left:1613px;top:340px;font:normal 12px/12px 'Liberation Sans',sans-serif;color:#555555;white-space:pre;letter-spacing:0.191px;">December 2, 2011 1:00 pm-3:00 pm</div>
<div class="a" style="left:2111px;top:340px;font:normal 12px/12px 'Liberation Sans',sans-serif;color:#555555;white-space:pre;letter-spacing:0.092px;">ANH-103</div>
<div class="a" style="left:2611px;top:340px;font:normal 12px/12px 'Liberation Sans',sans-serif;color:#21759b;white-space:pre;letter-spacing:0.142px;">jzheng-14</div>
<div class="a" style="left:2611px;top:356px;font:normal 12px/12px 'Liberation Sans',sans-serif;color:#21759b;white-space:pre;letter-spacing:0.251px;">jiehanzheng</div>
<div class="a" style="left:1613px;top:382px;font:normal 12px/12px 'Liberation Sans',sans-serif;color:#555555;white-space:pre;letter-spacing:0.225px;">December 1, 2011 8:00 am-10:00 am</div>
<div class="a" style="left:2111px;top:382px;font:normal 12px/12px 'Liberation Sans',sans-serif;color:#555555;white-space:pre;letter-spacing:0.092px;">ANH-102</div>
<div class="a" style="left:2611px;top:382px;font:normal 12px/12px 'Liberation Sans',sans-serif;color:#21759b;white-space:pre;letter-spacing:0.142px;">jzheng-14</div>
<div class="a" style="left:2611px;top:398px;font:normal 12px/12px 'Liberation Sans',sans-serif;color:#21759b;white-space:pre;letter-spacing:0.251px;">jiehanzheng</div>
<div class="a" style="left:1094px;width:2000px;top:467px;font:italic normal 12px/12px 'Liberation Serif',serif;color:#555555;text-align:right;white-space:pre;">2 items</div>
<div class="a" style="left:1605px;top:1009px;width:1495px;height:1px;background:#dfdfdf;"></div>
<div class="a" style="left:1605px;top:1024px;font:12px/12px 'Liberation Sans',sans-serif;color:#777;white-space:pre">Thank you for creating with <span style="color:#21759b">WordPress</span>.</div>
<div class="a" style="left:1100px;width:2000px;top:1024px;font:normal 12px/12px 'Liberation Sans',sans-serif;color:#777777;text-align:right;white-space:pre;">Version 3.3</div>
<svg class="a" style="left:2260px;top:621px;filter:drop-shadow(1px 1.5px 1px rgba(0,0,0,0.35))" width="18" height="25" viewBox="0 0 18 25">
<path d="M2.5 2 L2.5 19 L6.5 15.3 L9.5 21.8 L12.3 20.6 L9.5 14.3 L14.8 14.3 Z" fill="#000" stroke="#fff" stroke-width="1.6" stroke-linejoin="round"/>
</svg>
</body></html>
